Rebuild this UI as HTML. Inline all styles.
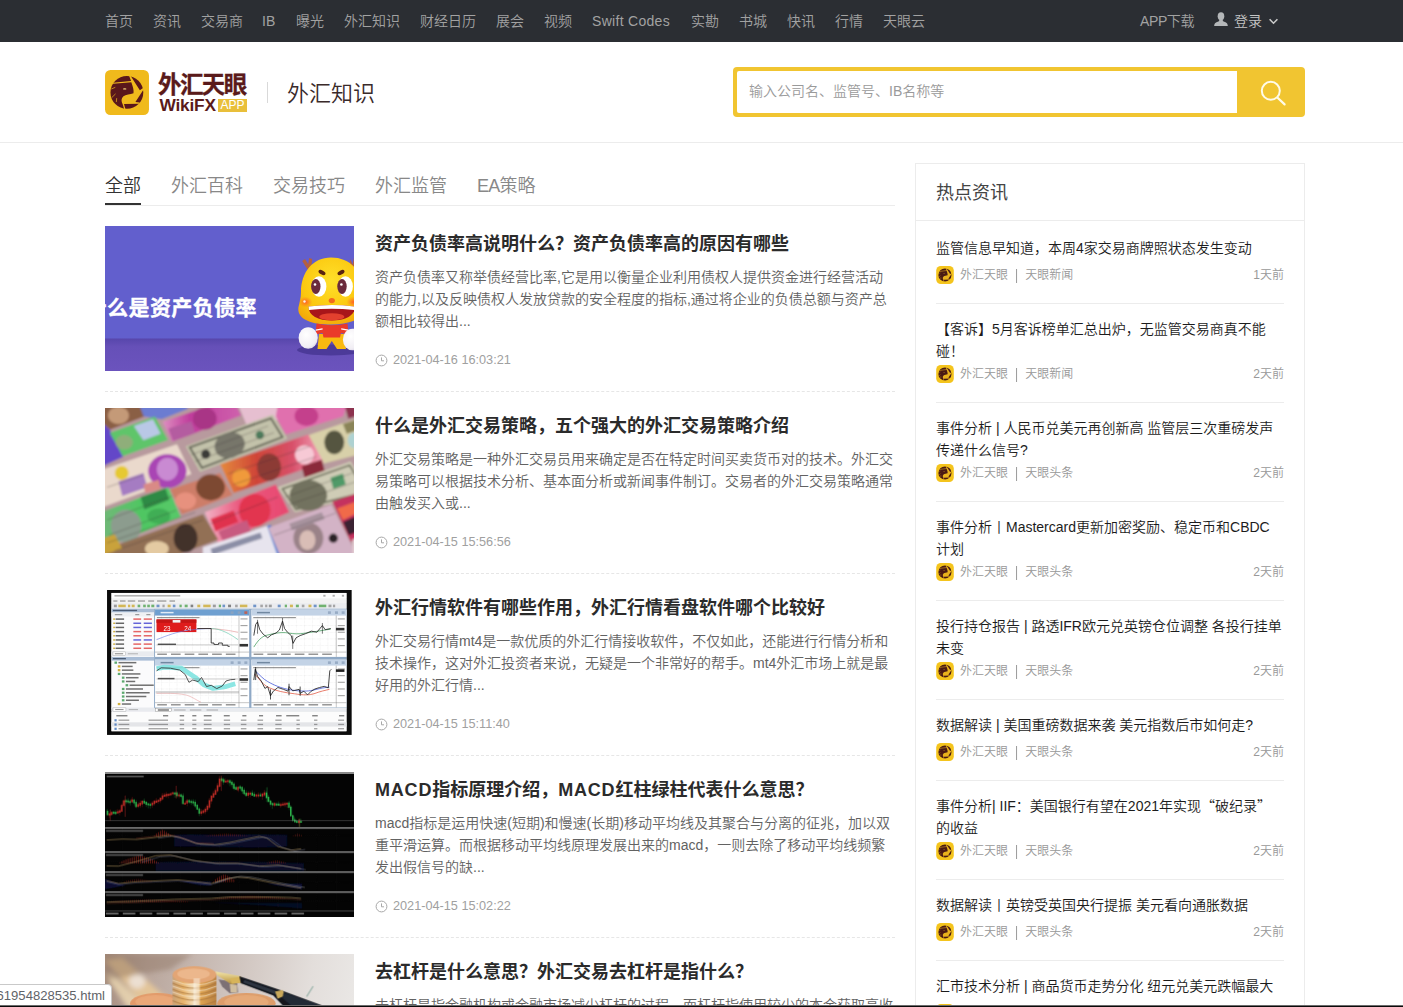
<!DOCTYPE html>
<html lang="zh-CN">
<head>
<meta charset="utf-8">
<title>外汇知识 - 外汇天眼</title>
<style>
*{box-sizing:border-box;margin:0;padding:0}
html,body{width:1403px;height:1007px;overflow:hidden;background:#fff}
body{font-family:"Liberation Sans","Noto Sans CJK SC",sans-serif;font-weight:350;color:#333;position:relative;-webkit-font-smoothing:antialiased}
a{color:inherit;text-decoration:none}
/* top nav */
.topnav{position:absolute;left:0;top:0;width:1403px;height:42px;background:#2b2e33}
.topnav a{position:absolute;top:0;height:42px;line-height:42px;font-size:14px;color:#a2a2a2;white-space:nowrap}
.topnav a.login{color:#c6c6c6}
/* header */
.header{position:absolute;left:0;top:42px;width:1403px;height:101px;background:#fff;border-bottom:1px solid #ececec}
.logo-icon{position:absolute;left:105px;top:28px}
.logo-cn{position:absolute;left:158px;top:27px;font-size:23.5px;line-height:32px;font-weight:700;color:#5a1a1a;letter-spacing:-1.6px;white-space:nowrap;-webkit-text-stroke:0.3px #5a1a1a}
.logo-en{position:absolute;left:159.5px;top:53.5px;font-size:17.3px;line-height:18px;font-weight:bold;color:#5a1a1a;white-space:nowrap;letter-spacing:-0.2px}
.logo-app{position:absolute;left:218px;top:57px;width:29px;height:13px;background:#e9bf3a;color:#fff;font-size:12px;line-height:13px;text-align:center;letter-spacing:0}
.logo-sep{position:absolute;left:267px;top:40px;width:1px;height:21px;background:#d9d9d9}
.logo-title{position:absolute;left:287px;top:35.5px;font-size:22px;line-height:32px;color:#3a2a2a;white-space:nowrap}
.search{position:absolute;left:733px;top:25px;width:572px;height:50px;background:#f1c531;border-radius:4px}
.search .inp{position:absolute;left:4px;top:4px;width:500px;height:42px;background:#fff;border-radius:2px 0 0 2px;font-size:14px;line-height:41px;color:#9a9a9a;padding-left:12px;white-space:nowrap}
.search svg{position:absolute;left:524px;top:10px}
/* tabs */
.tabs{position:absolute;left:105px;top:163px;width:790px;height:43px;border-bottom:1px solid #ececec}
.tabs span{position:absolute;top:8.5px;font-size:18px;line-height:28px;color:#888;white-space:nowrap}
.tabs span.on{color:#333}
.tabs span em{font-style:normal;letter-spacing:-0.8px}
.tabs i{position:absolute;left:0;top:40px;width:36px;height:2px;background:#333}
/* articles */
.art{position:absolute;left:105px;width:790px;height:182px}
.art .pic{position:absolute;left:0;top:0;width:249px;height:145px;overflow:hidden}
.art h3{position:absolute;left:270px;top:4px;font-size:18px;line-height:28px;font-weight:bold;color:#2b2b2b;white-space:nowrap}
.art h3 em{font-style:normal;letter-spacing:0.8px}
.art p{position:absolute;left:270px;top:40px;width:522px;font-size:14px;line-height:22px;color:#626262;font-weight:350}
.art p span{display:block;white-space:nowrap}
.art .tm{position:absolute;left:270px;top:124.5px;font-size:12.7px;line-height:18px;color:#a0a0a0;white-space:nowrap}
.art .tm svg{position:absolute;left:0;top:3px}
.art .tm b{font-weight:normal;margin-left:18px}
.art .dash{position:absolute;left:0;top:165px;width:790px;height:0;border-top:1px dashed #e6e6e6}
/* sidebar */
.side{position:absolute;left:915px;top:163px;width:390px;height:900px;border:1px solid #ececec;background:#fff}
.side h2{position:absolute;left:20px;top:14px;font-size:18px;line-height:30px;font-weight:normal;color:#444}
.side .hl{position:absolute;left:0;top:56px;width:388px;height:1px;background:#ececec}
.hot{position:absolute;left:936px;width:348px}
.hot .t{font-size:14px;line-height:22px;color:#1c1c1c}
.hot .t span{display:block;white-space:nowrap;height:22px}
.hot .t q{quotes:none;font-family:"Noto Sans CJK SC",sans-serif;line-height:0}
.hot .t q:before,.hot .t q:after{content:none}
.hot .m{position:relative;height:22px;font-size:12px;line-height:22px;color:#999;white-space:nowrap}
.hot .m svg{position:absolute;left:0;top:3px}
.hot .m .src{position:absolute;left:24px;top:1px}
.hot .m i{font-style:normal;margin:0 7px;display:inline-block;transform:scaleY(1.25)}
.hot .m .ago{position:absolute;right:0;top:1px}
.hot .ln{position:absolute;left:0;width:348px;height:1px;background:#ececec}
/* status tip */
.tip{position:absolute;left:-1px;top:984px;width:113px;height:23px;background:#fff;border:1px solid #c9c9c9;border-top-right-radius:4px;font-size:13.1px;line-height:21px;color:#5f6368;white-space:nowrap;overflow:hidden}
.tip span{position:absolute;left:-3.5px;top:0}
.botline{position:absolute;left:0;top:1005px;width:1403px;height:2px;background:linear-gradient(#6b6b6b 0,#6b6b6b 50%,#0a0a0a 50%,#0a0a0a 100%)}
</style>
</head>
<body>

<!-- TOP NAV -->
<div class="topnav">
  <a style="left:105px">首页</a>
  <a style="left:153px">资讯</a>
  <a style="left:201px">交易商</a>
  <a style="left:262px">IB</a>
  <a style="left:296px">曝光</a>
  <a style="left:344px">外汇知识</a>
  <a style="left:420px">财经日历</a>
  <a style="left:496px">展会</a>
  <a style="left:544px">视频</a>
  <a style="left:592px;letter-spacing:0.3px">Swift Codes</a>
  <a style="left:691px">实勘</a>
  <a style="left:739px">书城</a>
  <a style="left:787px">快讯</a>
  <a style="left:835px">行情</a>
  <a style="left:883px">天眼云</a>
  <a style="left:1140px;letter-spacing:-0.4px">APP下载</a>
  <a class="login" style="left:1234px">登录</a>
  <svg style="position:absolute;left:1214px;top:12px" width="14" height="14" viewBox="0 0 14 14"><ellipse cx="7" cy="4.3" rx="3.3" ry="4" fill="#b4b7b9"/><path d="M0.2 14 C0.2 10.8 2.6 10 5 9.2 L5.4 7.5 H8.6 L9 9.2 C11.4 10 13.8 10.8 13.8 14 Z" fill="#b4b7b9"/></svg>
  <svg style="position:absolute;left:1268px;top:17px" width="11" height="8" viewBox="0 0 11 8"><path d="M1.6 2.2 L5.5 6.2 L9.4 2.2" fill="none" stroke="#c9c9c9" stroke-width="1.6"/></svg>
</div>

<!-- HEADER -->
<div class="header">
  <svg class="logo-icon" width="44" height="45" viewBox="90 100 764 782"><rect x="90" y="100" width="764" height="782" rx="95" fill="#f0ba1c"/><circle cx="470" cy="490" r="285" fill="#5a171b"/><path d="M508 200 L534 200 L695 452 L752 414 L760 440 L618 655 L692 666 L684 688 L420 693 L445 780 L424 784 L398 700 C368 640 368 590 410 555 C450 525 530 522 585 502 C594 450 572 380 547 312 L228 338 L230 320 L543 293 Z" fill="#f0ba1c"/><ellipse cx="432" cy="430" rx="30" ry="11" fill="#f6d87f"/><path d="M205 428 L262 404 M212 575 L268 520 M287 650 L292 596" stroke="#f0ba1c" stroke-width="12" fill="none" stroke-linecap="round"/></svg>
  <div class="logo-cn">外汇天眼</div>
  <div class="logo-en">WikiFX</div>
  <div class="logo-app">APP</div>
  <div class="logo-sep"></div>
  <div class="logo-title">外汇知识</div>
  <div class="search">
    <div class="inp">输入公司名、监管号、IB名称等</div>
    <svg width="32" height="32" viewBox="0 0 32 32"><circle cx="13.8" cy="13.8" r="9" fill="none" stroke="#fffbe8" stroke-width="2"/><path d="M20.6 20.8 L27.6 27.4" stroke="#fffbe8" stroke-width="2.2" stroke-linecap="round"/></svg>
  </div>
</div>

<!-- TABS -->
<div class="tabs">
  <span class="on" style="left:0">全部</span>
  <span style="left:66px">外汇百科</span>
  <span style="left:168px">交易技巧</span>
  <span style="left:270px">外汇监管</span>
  <span style="left:372px"><em>EA</em>策略</span>
  <i></i>
</div>

<!-- ARTICLES -->
<div class="art" style="top:226px">
  <div class="pic"><!--P1S--><svg width="249" height="145" viewBox="0 0 249 145">
<defs>
<linearGradient id="p1f" x1="0" y1="0" x2="0" y2="1"><stop offset="0" stop-color="#5746ab"/><stop offset="0.25" stop-color="#6650b8"/><stop offset="1" stop-color="#6b53bd"/></linearGradient>
<radialGradient id="p1h" cx="0.5" cy="0.35" r="0.75"><stop offset="0" stop-color="#ffe02a"/><stop offset="0.6" stop-color="#fbc70f"/><stop offset="1" stop-color="#f0a008"/></radialGradient>
<radialGradient id="p1w" cx="0.4" cy="0.35" r="0.8"><stop offset="0" stop-color="#ffffff"/><stop offset="0.7" stop-color="#f1eef4"/><stop offset="1" stop-color="#c9c2dc"/></radialGradient>
<radialGradient id="p1c" cx="0.5" cy="0.5" r="0.5"><stop offset="0" stop-color="#ff5a28" stop-opacity="0.95"/><stop offset="1" stop-color="#ff7a20" stop-opacity="0"/></radialGradient>
</defs>
<rect width="249" height="145" fill="#625fcd"/>
<rect y="112.5" width="249" height="32.5" fill="url(#p1f)"/>
<ellipse cx="226" cy="124" rx="34" ry="5.5" fill="#43338f" opacity="0.75"/>
<text x="-19.4" y="88.7" font-family="'Liberation Sans','Noto Sans CJK SC',sans-serif" font-weight="700" font-size="21" fill="#fff" stroke="#fff" stroke-width="0.35" textLength="171" lengthAdjust="spacing">什么是资产负债率</text>
<path d="M200 33 l3.2 5 l1-6 l3 1 l-1 9 l-4 1 l-5-8z" fill="#b3603f"/>
<path d="M245 33 l2.6 5 l1.4-6 h1 v14 l-5 -3z" fill="#b3603f"/>
<path d="M226 31.5 C246 31.5 258 46 258 66 C258 72 259 76 260 80 C262 92 246 98.5 226 98.5 C206 98.5 191.5 93 193.5 81 C194.5 77 196 72 196 66 C196 46 208 31.5 226 31.5Z" fill="url(#p1h)"/>
<ellipse cx="200.5" cy="76" rx="7" ry="5.5" fill="url(#p1c)"/>
<ellipse cx="248.5" cy="76" rx="7" ry="5.5" fill="url(#p1c)"/>
<circle cx="199.5" cy="75.5" r="1.2" fill="#fff" opacity="0.9"/>
<ellipse cx="217" cy="46.5" rx="3.8" ry="2" transform="rotate(28 217 46.5)" fill="#5a2410"/>
<ellipse cx="236" cy="46.5" rx="3.8" ry="2" transform="rotate(-28 236 46.5)" fill="#5a2410"/>
<ellipse cx="214" cy="60.5" rx="7.4" ry="10.3" fill="#fff"/>
<ellipse cx="240.5" cy="60.5" rx="7.4" ry="10.3" fill="#fff"/>
<ellipse cx="210.8" cy="60.5" rx="4.7" ry="7.4" fill="#6a2a3c"/>
<ellipse cx="237" cy="60.5" rx="4.7" ry="7.4" fill="#6a2a3c"/>
<circle cx="210" cy="58.5" r="1.3" fill="#fff"/><circle cx="236.4" cy="58.5" r="1.3" fill="#fff"/>
<ellipse cx="226.8" cy="74.6" rx="3.1" ry="2.6" fill="#f26a1c"/>
<path d="M203.5 80.5 Q226.5 77.5 250 80.5 C250 90 240 94.5 226.8 94.5 C213 94.5 203.5 90 203.5 80.5Z" fill="#a8161a"/>
<path d="M203.5 80.5 Q226.5 77.5 250 80.5 L249.6 84 Q226.5 81.5 204 84Z" fill="#fff"/>
<ellipse cx="226.8" cy="90.8" rx="12.5" ry="3.6" fill="#e3402e"/>
<path d="M214 108 H239.5 L241 123 H232 L226.8 115 L221.5 123 H212.5Z" fill="#f9b90f"/>
<path d="M211.5 97.5 Q226.8 101 242.5 97.5 L243.5 108.5 L236 107 L235 111.5 H218.5 L217.5 107 L210.5 108.5Z" fill="#ea3a2a"/>
<path d="M210.8 104.2 L217.6 102.8 M243.2 104.2 L236.2 102.8" stroke="#fff" stroke-width="1.3"/>
<ellipse cx="203.2" cy="112" rx="9.6" ry="10.8" fill="url(#p1w)"/>
<ellipse cx="247.5" cy="113.5" rx="9.6" ry="10.8" fill="url(#p1w)"/>
</svg><!--P1E--></div>
  <h3>资产负债率高说明什么？资产负债率高的原因有哪些</h3>
  <p><span>资产负债率又称举债经营比率,它是用以衡量企业利用债权人提供资金进行经营活动</span><span>的能力,以及反映债权人发放贷款的安全程度的指标,通过将企业的负债总额与资产总</span><span>额相比较得出...</span></p>
  <div class="tm"><svg width="13" height="13" viewBox="0 0 13 13"><circle cx="6.5" cy="6.5" r="5.4" fill="none" stroke="#a8a8a8" stroke-width="1"/><path d="M6.5 3.4V6.8H9" fill="none" stroke="#a8a8a8" stroke-width="1"/></svg><b>2021-04-16 16:03:21</b></div>
  <div class="dash"></div>
</div>
<div class="art" style="top:408px">
  <div class="pic"><!--P2S--><svg width="249" height="145" viewBox="27 43 1343.6 782.4" preserveAspectRatio="none">
<defs>
<linearGradient id="p2nz" x1="0" y1="0" x2="1" y2="0"><stop offset="0" stop-color="#e58a3c"/><stop offset="0.35" stop-color="#cf4538"/><stop offset="0.7" stop-color="#d8506a"/><stop offset="1" stop-color="#f3a6bd"/></linearGradient>
<linearGradient id="p2rm" x1="0" y1="0" x2="1" y2="0"><stop offset="0" stop-color="#f2b3c6"/><stop offset="0.4" stop-color="#ea5b80"/><stop offset="1" stop-color="#e8476f"/></linearGradient>
<linearGradient id="p2mg" x1="0" y1="0" x2="1" y2="0"><stop offset="0" stop-color="#dd8fc0"/><stop offset="0.35" stop-color="#c03c9c"/><stop offset="1" stop-color="#cf62ad"/></linearGradient>
<linearGradient id="p2au" x1="0" y1="0" x2="1" y2="0"><stop offset="0" stop-color="#74b77a"/><stop offset="0.5" stop-color="#4fc662"/><stop offset="1" stop-color="#57c968"/></linearGradient>
<filter id="p2b" filterUnits="userSpaceOnUse" x="-60" y="-40" width="1520" height="960"><feGaussianBlur stdDeviation="5"/></filter>
</defs>
<g filter="url(#p2b)" transform="translate(698.8 434.2) scale(1.035) translate(-698.8 -434.2)">
<rect x="-60" y="-40" width="1520" height="960" fill="#b89a9e"/>
<polygon points="27,43 235,43 255,100 75,170 27,125" fill="#8a5e44"/>
<ellipse cx="120" cy="95" rx="55" ry="45" fill="#c49a78"/>
<polygon points="230,43 480,43 480,62 345,115 252,100" fill="#6c7bd1"/>
<polygon points="27,125 75,170 145,310 27,365" fill="#6446c8"/>
<polygon points="75,185 310,100 378,223 143,308" fill="#5fc56a"/>
<polygon points="200,150 300,115 340,190 250,225" fill="#b9c8e6"/>
<ellipse cx="150" cy="235" rx="45" ry="38" fill="#8fae7a"/>
<polygon points="350,128 600,43 735,43 760,95 400,232" fill="url(#p2mg)"/>
<ellipse cx="570" cy="112" rx="62" ry="58" fill="#a93486"/>
<polygon points="380,165 500,125 520,185 405,228" fill="#b45ca0"/>
<polygon points="745,43 950,43 1000,110 790,150" fill="#e6bfd0"/>
<polygon points="950,43 1310,43 1292,100 992,195 940,100" fill="#e070ae"/>
<ellipse cx="1100" cy="98" rx="62" ry="52" fill="#c4408c"/>
<polygon points="1300,43 1371,43 1371,95 1318,112" fill="#8d3350"/>
<polygon points="470,255 925,90 1000,215 545,390" fill="#c3c2aa"/>
<polygon points="492,262 915,110 975,208 555,368" fill="none" stroke="#5f5f52" stroke-width="10"/>
<ellipse cx="700" cy="250" rx="80" ry="66" transform="rotate(-19 700 250)" fill="#77766a"/>
<circle cx="575" cy="297" r="24" fill="#3a3a38"/><circle cx="857" cy="197" r="22" fill="#4d7b5c"/>
<polygon points="1105,200 1371,108 1371,300 1190,345" fill="#d8d0a9"/>
<ellipse cx="1245" cy="235" rx="52" ry="62" fill="#55553f"/>
<polygon points="1290,140 1371,112 1371,170 1310,190" fill="#8a8458"/>
<ellipse cx="1345" cy="225" rx="30" ry="40" fill="#aed2d2"/>
<polygon points="27,380 425,245 500,400 27,578" fill="#ead9cc"/>
<ellipse cx="375" cy="385" rx="100" ry="88" fill="#a945b4"/>
<ellipse cx="375" cy="375" rx="55" ry="60" fill="#c98ad2"/>
<circle cx="137" cy="395" r="36" fill="#e6c931"/>
<polygon points="120,440 250,395 270,470 140,515" fill="#a57cc2"/>
<polygon points="250,455 330,430 340,480 260,500" fill="#d98a86"/>
<polygon points="650,350 1110,195 1190,340 720,500" fill="url(#p2nz)"/>
<ellipse cx="905" cy="365" rx="62" ry="72" fill="#8c3a35"/>
<circle cx="760" cy="420" r="48" fill="#f09a3a"/>
<circle cx="1090" cy="300" r="50" fill="#f7c9d5"/>
<polygon points="1075,360 1180,325 1195,385 1090,420" fill="#8a2a3a"/>
<polygon points="950,470 1330,335 1371,400 1371,520 1040,600" fill="#cfccb6"/>
<polygon points="975,478 1325,355 1371,430 1371,505 1045,585" fill="none" stroke="#6a6a58" stroke-width="9"/>
<ellipse cx="1110" cy="512" rx="98" ry="80" fill="#72725e"/>
<polygon points="1225,420 1290,398 1305,455 1240,478" fill="#4f9a68"/>
<polygon points="390,480 650,395 715,510 450,612" fill="#cd7d68"/>
<ellipse cx="600" cy="470" rx="75" ry="68" fill="#7d4a32"/>
<ellipse cx="470" cy="540" rx="55" ry="45" fill="#e7917e"/>
<polygon points="570,600 940,455 1010,600 640,762" fill="url(#p2rm)"/>
<ellipse cx="830" cy="590" rx="82" ry="85" fill="#e2344f"/>
<polygon points="600,635 720,590 745,650 625,700" fill="#e0304e"/>
<polygon points="640,700 790,640 810,700 670,760" fill="#c85a80"/>
<polygon points="27,600 380,470 445,625 27,792" fill="url(#p2au)"/>
<ellipse cx="160" cy="672" rx="80" ry="85" fill="#8c9c8e"/>
<polygon points="235,520 365,475 385,535 255,585" fill="#2f8a45"/>
<ellipse cx="330" cy="620" rx="60" ry="40" fill="#3fae55"/>
<polygon points="1235,545 1371,498 1371,742 1330,752" fill="#c4335e"/>
<polygon points="1260,580 1371,540 1371,600 1290,640" fill="#f06a4a"/>
<polygon points="1290,650 1371,615 1371,700 1320,720" fill="#3a2030"/>
<polygon points="27,800 560,610 640,742 420,826 27,826" fill="#927055"/>
<ellipse cx="470" cy="735" rx="62" ry="75" fill="#43302a"/>
<ellipse cx="320" cy="790" rx="62" ry="40" fill="#e4caa2"/>
<polygon points="27,740 100,715 140,790 27,826" fill="#c9a23a"/>
<polygon points="560,782 905,668 965,826 560,826" fill="#e7e4ee"/>
<polygon points="895,672 915,666 975,826 950,826" fill="#2f6fd1"/>
<polygon points="600,790 860,705 870,735 610,822" fill="#8b8ea6"/>
<polygon points="900,680 1230,560 1340,780 1340,826 962,826" fill="#d3b3c6"/>
<ellipse cx="1110" cy="735" rx="78" ry="82" fill="#9a8288"/>
<ellipse cx="1105" cy="745" rx="42" ry="52" fill="#d9bdb6"/>
<circle cx="1240" cy="735" r="24" fill="#2b2326"/>
<polygon points="1010,660 1180,600 1195,635 1025,695" fill="#a7939e"/>
<polygon points="1340,742 1371,732 1371,826 1340,826" fill="#e6d0d6"/>
<g stroke="#3a3030" stroke-width="5" opacity="0.35" fill="none">
<path d="M500 300 L900 150 M520 335 L930 185"/>
<path d="M990 520 L1340 395 M1010 560 L1360 440"/>
<path d="M60 760 L520 600 M100 800 L560 640"/>
<path d="M930 720 L1250 605"/>
<path d="M60 470 L250 405"/>
<path d="M690 400 L1120 255 M720 455 L1150 310"/>
<path d="M600 660 L950 520"/>
<path d="M60 640 L400 515 M70 720 L420 590"/>
</g>
</g>
</svg><!--P2E--></div>
  <h3>什么是外汇交易策略，五个强大的外汇交易策略介绍</h3>
  <p><span>外汇交易策略是一种外汇交易员用来确定是否在特定时间买卖货币对的技术。外汇交</span><span>易策略可以根据技术分析、基本面分析或新闻事件制订。交易者的外汇交易策略通常</span><span>由触发买入或...</span></p>
  <div class="tm"><svg width="13" height="13" viewBox="0 0 13 13"><circle cx="6.5" cy="6.5" r="5.4" fill="none" stroke="#a8a8a8" stroke-width="1"/><path d="M6.5 3.4V6.8H9" fill="none" stroke="#a8a8a8" stroke-width="1"/></svg><b>2021-04-15 15:56:56</b></div>
  <div class="dash"></div>
</div>
<div class="art" style="top:590px">
  <div class="pic"><!--P3S--><svg width="249" height="145" viewBox="27 54 1343.6 782.4" preserveAspectRatio="none">
<defs><filter id="p3b" filterUnits="userSpaceOnUse" x="0" y="0" width="1400" height="900"><feGaussianBlur stdDeviation="2.2"/></filter></defs>
<rect x="0" y="0" width="1400" height="900" fill="#fff"/>
<rect x="38" y="54" width="1320" height="782" fill="#0b0b0b"/>
<g filter="url(#p3b)">
<rect x="62" y="70" width="1268" height="746" fill="#f3f4f6"/>
<rect x="62" y="70" width="1268" height="30" fill="#fdfdfd"/>
<rect x="78" y="82" width="355" height="7" fill="#555" opacity="0.55"/>
<rect x="1205" y="80" width="12" height="10" fill="#777" opacity="0.6"/>
<rect x="1255" y="80" width="12" height="10" fill="#777" opacity="0.6"/>
<rect x="1305" y="80" width="12" height="10" fill="#777" opacity="0.6"/>
<rect x="62" y="100" width="1268" height="25" fill="#f2f2f2"/>
<rect x="72" y="110" width="22" height="7" fill="#444" opacity="0.5"/>
<rect x="108" y="110" width="30" height="7" fill="#444" opacity="0.5"/>
<rect x="150" y="110" width="40" height="7" fill="#444" opacity="0.5"/>
<rect x="205" y="110" width="38" height="7" fill="#444" opacity="0.5"/>
<rect x="260" y="110" width="32" height="7" fill="#444" opacity="0.5"/>
<rect x="308" y="110" width="50" height="7" fill="#444" opacity="0.5"/>
<rect x="375" y="110" width="30" height="7" fill="#444" opacity="0.5"/>
<rect x="62" y="125" width="1268" height="30" fill="#ebecef"/>
<rect x="75" y="133" width="16" height="14" fill="#7a7a7a" opacity="0.7"/>
<rect x="99" y="133" width="40" height="14" fill="#c9a21a" opacity="0.7"/>
<rect x="151" y="133" width="12" height="14" fill="#c9a21a" opacity="0.7"/>
<rect x="171" y="133" width="16" height="14" fill="#c9a21a" opacity="0.7"/>
<rect x="203" y="133" width="14" height="14" fill="#3a9a3a" opacity="0.7"/>
<rect x="233" y="133" width="14" height="14" fill="#3a9a3a" opacity="0.7"/>
<rect x="255" y="133" width="14" height="14" fill="#3a9a3a" opacity="0.7"/>
<rect x="277" y="133" width="16" height="14" fill="#3a9a3a" opacity="0.7"/>
<rect x="305" y="133" width="16" height="14" fill="#3b6fb8" opacity="0.7"/>
<rect x="337" y="133" width="12" height="14" fill="#888" opacity="0.7"/>
<rect x="365" y="133" width="16" height="14" fill="#c9a21a" opacity="0.7"/>
<rect x="393" y="133" width="14" height="14" fill="#3b6fb8" opacity="0.7"/>
<rect x="429" y="133" width="12" height="14" fill="#3a9a3a" opacity="0.7"/>
<rect x="457" y="133" width="16" height="14" fill="#3a9a3a" opacity="0.7"/>
<rect x="489" y="133" width="14" height="14" fill="#555" opacity="0.7"/>
<rect x="525" y="133" width="16" height="14" fill="#c9a21a" opacity="0.7"/>
<rect x="557" y="133" width="40" height="14" fill="#c9a21a" opacity="0.7"/>
<rect x="609" y="133" width="16" height="14" fill="#7a7a7a" opacity="0.7"/>
<rect x="641" y="133" width="12" height="14" fill="#3a9a3a" opacity="0.7"/>
<rect x="661" y="133" width="14" height="14" fill="#3b6fb8" opacity="0.7"/>
<rect x="691" y="133" width="16" height="14" fill="#555" opacity="0.7"/>
<rect x="729" y="133" width="14" height="14" fill="#888" opacity="0.7"/>
<rect x="755" y="133" width="40" height="14" fill="#c9a21a" opacity="0.7"/>
<rect x="827" y="133" width="16" height="14" fill="#3b6fb8" opacity="0.7"/>
<rect x="865" y="133" width="14" height="14" fill="#888" opacity="0.7"/>
<rect x="891" y="133" width="12" height="14" fill="#888" opacity="0.7"/>
<rect x="911" y="133" width="16" height="14" fill="#7a7a7a" opacity="0.7"/>
<rect x="959" y="133" width="16" height="14" fill="#3b6fb8" opacity="0.7"/>
<rect x="997" y="133" width="12" height="14" fill="#3a9a3a" opacity="0.7"/>
<rect x="1025" y="133" width="16" height="14" fill="#c9a21a" opacity="0.7"/>
<rect x="1057" y="133" width="16" height="14" fill="#3a9a3a" opacity="0.7"/>
<rect x="1089" y="133" width="14" height="14" fill="#888" opacity="0.7"/>
<rect x="1125" y="133" width="16" height="14" fill="#c9a21a" opacity="0.7"/>
<rect x="1153" y="133" width="16" height="14" fill="#3b6fb8" opacity="0.7"/>
<rect x="1181" y="133" width="40" height="14" fill="#3a9a3a" opacity="0.7"/>
<rect x="1233" y="133" width="16" height="14" fill="#888" opacity="0.7"/>
<rect x="1257" y="133" width="12" height="14" fill="#888" opacity="0.7"/>
<rect x="62" y="155" width="230" height="540" fill="#fbfbfc"/>
<rect x="62" y="155" width="230" height="20" fill="#a9bdd6"/>
<rect x="70" y="161" width="130" height="7" fill="#23324a" opacity="0.7"/>
<rect x="62" y="177" width="230" height="20" fill="#eef0f3"/>
<rect x="80" y="184" width="40" height="6" fill="#555" opacity="0.6"/>
<rect x="190" y="184" width="22" height="6" fill="#555" opacity="0.6"/>
<rect x="250" y="184" width="22" height="6" fill="#555" opacity="0.6"/>
<rect x="72" y="207.0" width="8" height="8" fill="#c9a21a"/>
<rect x="84" y="207.0" width="46" height="8" fill="#333" opacity="0.75"/>
<rect x="180" y="207.0" width="42" height="8" fill="#d33" opacity="0.75"/>
<rect x="236" y="207.0" width="44" height="8" fill="#d33" opacity="0.75"/>
<rect x="72" y="229.5" width="8" height="8" fill="#c9a21a"/>
<rect x="84" y="229.5" width="46" height="8" fill="#333" opacity="0.75"/>
<rect x="180" y="229.5" width="42" height="8" fill="#33c" opacity="0.75"/>
<rect x="236" y="229.5" width="44" height="8" fill="#33c" opacity="0.75"/>
<rect x="72" y="252.0" width="8" height="8" fill="#c9a21a"/>
<rect x="84" y="252.0" width="46" height="8" fill="#333" opacity="0.75"/>
<rect x="180" y="252.0" width="42" height="8" fill="#33c" opacity="0.75"/>
<rect x="236" y="252.0" width="44" height="8" fill="#33c" opacity="0.75"/>
<rect x="72" y="274.5" width="8" height="8" fill="#c9a21a"/>
<rect x="84" y="274.5" width="46" height="8" fill="#333" opacity="0.75"/>
<rect x="180" y="274.5" width="42" height="8" fill="#d33" opacity="0.75"/>
<rect x="236" y="274.5" width="44" height="8" fill="#d33" opacity="0.75"/>
<rect x="72" y="297.0" width="8" height="8" fill="#c9a21a"/>
<rect x="84" y="297.0" width="46" height="8" fill="#333" opacity="0.75"/>
<rect x="180" y="297.0" width="42" height="8" fill="#d33" opacity="0.75"/>
<rect x="236" y="297.0" width="44" height="8" fill="#d33" opacity="0.75"/>
<rect x="72" y="319.5" width="8" height="8" fill="#c9a21a"/>
<rect x="84" y="319.5" width="46" height="8" fill="#333" opacity="0.75"/>
<rect x="180" y="319.5" width="42" height="8" fill="#33c" opacity="0.75"/>
<rect x="236" y="319.5" width="44" height="8" fill="#33c" opacity="0.75"/>
<rect x="72" y="342.0" width="8" height="8" fill="#c9a21a"/>
<rect x="84" y="342.0" width="46" height="8" fill="#333" opacity="0.75"/>
<rect x="180" y="342.0" width="42" height="8" fill="#d33" opacity="0.75"/>
<rect x="236" y="342.0" width="44" height="8" fill="#d33" opacity="0.75"/>
<rect x="72" y="364.5" width="8" height="8" fill="#c9a21a"/>
<rect x="84" y="364.5" width="46" height="8" fill="#333" opacity="0.75"/>
<rect x="180" y="364.5" width="42" height="8" fill="#d33" opacity="0.75"/>
<rect x="236" y="364.5" width="44" height="8" fill="#d33" opacity="0.75"/>
<rect x="62" y="385" width="230" height="25" fill="#e9ebef"/>
<rect x="70" y="388" width="68" height="20" fill="#fff" stroke="#999" stroke-width="2"/>
<rect x="80" y="395" width="45" height="6" fill="#444" opacity="0.6"/>
<rect x="150" y="395" width="55" height="6" fill="#888" opacity="0.5"/>
<rect x="62" y="415" width="230" height="20" fill="#a9bdd6"/>
<rect x="70" y="421" width="70" height="7" fill="#23324a" opacity="0.7"/>
<rect x="78" y="440.0" width="14" height="12" fill="#3e9a55" opacity="0.85"/>
<rect x="100" y="442.0" width="96" height="8" fill="#333" opacity="0.7"/>
<rect x="96" y="460.3" width="14" height="12" fill="#c9a21a" opacity="0.85"/>
<rect x="118" y="462.3" width="58" height="8" fill="#333" opacity="0.7"/>
<rect x="96" y="480.6" width="14" height="12" fill="#c9a21a" opacity="0.85"/>
<rect x="118" y="482.6" width="62" height="8" fill="#333" opacity="0.7"/>
<rect x="96" y="500.9" width="14" height="12" fill="#3e9a55" opacity="0.85"/>
<rect x="118" y="502.9" width="100" height="8" fill="#333" opacity="0.7"/>
<rect x="118" y="521.2" width="14" height="12" fill="#3e9a55" opacity="0.85"/>
<rect x="140" y="523.2" width="68" height="8" fill="#333" opacity="0.7"/>
<rect x="118" y="541.5" width="14" height="12" fill="#3e9a55" opacity="0.85"/>
<rect x="140" y="543.5" width="50" height="8" fill="#333" opacity="0.7"/>
<rect x="138" y="561.8" width="14" height="12" fill="#3e9a55" opacity="0.85"/>
<rect x="160" y="563.8" width="130" height="8" fill="#333" opacity="0.7"/>
<rect x="118" y="582.1" width="14" height="12" fill="#3e9a55" opacity="0.85"/>
<rect x="140" y="584.1" width="92" height="8" fill="#333" opacity="0.7"/>
<rect x="118" y="602.4" width="14" height="12" fill="#3e9a55" opacity="0.85"/>
<rect x="140" y="604.4" width="128" height="8" fill="#333" opacity="0.7"/>
<rect x="118" y="622.7" width="14" height="12" fill="#3e9a55" opacity="0.85"/>
<rect x="140" y="624.7" width="110" height="8" fill="#333" opacity="0.7"/>
<rect x="118" y="643.0" width="14" height="12" fill="#3e9a55" opacity="0.85"/>
<rect x="140" y="645.0" width="70" height="8" fill="#333" opacity="0.7"/>
<rect x="96" y="663.3" width="14" height="12" fill="#c9a21a" opacity="0.85"/>
<rect x="118" y="665.3" width="50" height="8" fill="#333" opacity="0.7"/>
<rect x="62" y="688" width="230" height="22" fill="#e9ebef"/>
<rect x="70" y="690" width="70" height="18" fill="#fff" stroke="#999" stroke-width="2"/>
<rect x="82" y="696" width="45" height="6" fill="#444" opacity="0.55"/>
<rect x="155" y="696" width="50" height="6" fill="#888" opacity="0.5"/>
<rect x="292" y="155" width="1038" height="540" fill="#8fa9c6"/>
<rect x="297" y="160" width="508" height="255" fill="#fff"/>
<rect x="297" y="160" width="508" height="32" fill="#6e9fd0"/>
<rect x="327" y="172" width="70" height="8" fill="#fff" opacity="0.8"/>
<rect x="705" y="169" width="16" height="14" fill="#8da3bd" opacity="0.8"/>
<rect x="743" y="169" width="16" height="14" fill="#8da3bd" opacity="0.8"/>
<rect x="779" y="169" width="16" height="14" fill="#d0523a" opacity="0.8"/>
<path d="M332 194V387" stroke="#b9b9b9" stroke-width="1.6" stroke-dasharray="3 4" opacity="0.8"/>
<path d="M374 194V387" stroke="#b9b9b9" stroke-width="1.6" stroke-dasharray="3 4" opacity="0.8"/>
<path d="M416 194V387" stroke="#b9b9b9" stroke-width="1.6" stroke-dasharray="3 4" opacity="0.8"/>
<path d="M458 194V387" stroke="#b9b9b9" stroke-width="1.6" stroke-dasharray="3 4" opacity="0.8"/>
<path d="M500 194V387" stroke="#b9b9b9" stroke-width="1.6" stroke-dasharray="3 4" opacity="0.8"/>
<path d="M542 194V387" stroke="#b9b9b9" stroke-width="1.6" stroke-dasharray="3 4" opacity="0.8"/>
<path d="M584 194V387" stroke="#b9b9b9" stroke-width="1.6" stroke-dasharray="3 4" opacity="0.8"/>
<path d="M626 194V387" stroke="#b9b9b9" stroke-width="1.6" stroke-dasharray="3 4" opacity="0.8"/>
<path d="M668 194V387" stroke="#b9b9b9" stroke-width="1.6" stroke-dasharray="3 4" opacity="0.8"/>
<path d="M710 194V387" stroke="#b9b9b9" stroke-width="1.6" stroke-dasharray="3 4" opacity="0.8"/>
<path d="M301 210H750" stroke="#b9b9b9" stroke-width="1.6" stroke-dasharray="3 4" opacity="0.8"/>
<rect x="758" y="207" width="38" height="6" fill="#555" opacity="0.55"/>
<path d="M301 246H750" stroke="#b9b9b9" stroke-width="1.6" stroke-dasharray="3 4" opacity="0.8"/>
<rect x="758" y="243" width="38" height="6" fill="#555" opacity="0.55"/>
<path d="M301 282H750" stroke="#b9b9b9" stroke-width="1.6" stroke-dasharray="3 4" opacity="0.8"/>
<rect x="758" y="279" width="38" height="6" fill="#555" opacity="0.55"/>
<path d="M301 318H750" stroke="#b9b9b9" stroke-width="1.6" stroke-dasharray="3 4" opacity="0.8"/>
<rect x="758" y="315" width="38" height="6" fill="#555" opacity="0.55"/>
<path d="M301 354H750" stroke="#b9b9b9" stroke-width="1.6" stroke-dasharray="3 4" opacity="0.8"/>
<rect x="758" y="351" width="38" height="6" fill="#555" opacity="0.55"/>
<path d="M750 192V415" stroke="#666" stroke-width="2"/>
<path d="M297 389H805" stroke="#666" stroke-width="2"/>
<rect x="309" y="397" width="52" height="7" fill="#444" opacity="0.65"/>
<rect x="383" y="397" width="52" height="7" fill="#444" opacity="0.65"/>
<rect x="457" y="397" width="52" height="7" fill="#444" opacity="0.65"/>
<rect x="531" y="397" width="52" height="7" fill="#444" opacity="0.65"/>
<rect x="605" y="397" width="52" height="7" fill="#444" opacity="0.65"/>
<rect x="679" y="397" width="52" height="7" fill="#444" opacity="0.65"/>
<rect x="307" y="200" width="230" height="6" fill="#333" opacity="0.55"/>
<rect x="817" y="160" width="513" height="255" fill="#fff"/>
<rect x="817" y="160" width="513" height="32" fill="#c3d3e6"/>
<rect x="847" y="172" width="70" height="8" fill="#5d7690" opacity="0.8"/>
<rect x="1230" y="169" width="16" height="14" fill="#8da3bd" opacity="0.8"/>
<rect x="1268" y="169" width="16" height="14" fill="#8da3bd" opacity="0.8"/>
<rect x="1304" y="169" width="16" height="14" fill="#8da3bd" opacity="0.8"/>
<path d="M852 194V387" stroke="#b9b9b9" stroke-width="1.6" stroke-dasharray="3 4" opacity="0.8"/>
<path d="M894 194V387" stroke="#b9b9b9" stroke-width="1.6" stroke-dasharray="3 4" opacity="0.8"/>
<path d="M936 194V387" stroke="#b9b9b9" stroke-width="1.6" stroke-dasharray="3 4" opacity="0.8"/>
<path d="M978 194V387" stroke="#b9b9b9" stroke-width="1.6" stroke-dasharray="3 4" opacity="0.8"/>
<path d="M1020 194V387" stroke="#b9b9b9" stroke-width="1.6" stroke-dasharray="3 4" opacity="0.8"/>
<path d="M1062 194V387" stroke="#b9b9b9" stroke-width="1.6" stroke-dasharray="3 4" opacity="0.8"/>
<path d="M1104 194V387" stroke="#b9b9b9" stroke-width="1.6" stroke-dasharray="3 4" opacity="0.8"/>
<path d="M1146 194V387" stroke="#b9b9b9" stroke-width="1.6" stroke-dasharray="3 4" opacity="0.8"/>
<path d="M1188 194V387" stroke="#b9b9b9" stroke-width="1.6" stroke-dasharray="3 4" opacity="0.8"/>
<path d="M1230 194V387" stroke="#b9b9b9" stroke-width="1.6" stroke-dasharray="3 4" opacity="0.8"/>
<path d="M1272 194V387" stroke="#b9b9b9" stroke-width="1.6" stroke-dasharray="3 4" opacity="0.8"/>
<path d="M821 210H1275" stroke="#b9b9b9" stroke-width="1.6" stroke-dasharray="3 4" opacity="0.8"/>
<rect x="1283" y="207" width="38" height="6" fill="#555" opacity="0.55"/>
<path d="M821 246H1275" stroke="#b9b9b9" stroke-width="1.6" stroke-dasharray="3 4" opacity="0.8"/>
<rect x="1283" y="243" width="38" height="6" fill="#555" opacity="0.55"/>
<path d="M821 282H1275" stroke="#b9b9b9" stroke-width="1.6" stroke-dasharray="3 4" opacity="0.8"/>
<rect x="1283" y="279" width="38" height="6" fill="#555" opacity="0.55"/>
<path d="M821 318H1275" stroke="#b9b9b9" stroke-width="1.6" stroke-dasharray="3 4" opacity="0.8"/>
<rect x="1283" y="315" width="38" height="6" fill="#555" opacity="0.55"/>
<path d="M821 354H1275" stroke="#b9b9b9" stroke-width="1.6" stroke-dasharray="3 4" opacity="0.8"/>
<rect x="1283" y="351" width="38" height="6" fill="#555" opacity="0.55"/>
<path d="M1275 192V415" stroke="#666" stroke-width="2"/>
<path d="M817 389H1330" stroke="#666" stroke-width="2"/>
<rect x="829" y="397" width="52" height="7" fill="#444" opacity="0.65"/>
<rect x="903" y="397" width="52" height="7" fill="#444" opacity="0.65"/>
<rect x="977" y="397" width="52" height="7" fill="#444" opacity="0.65"/>
<rect x="1051" y="397" width="52" height="7" fill="#444" opacity="0.65"/>
<rect x="1125" y="397" width="52" height="7" fill="#444" opacity="0.65"/>
<rect x="1199" y="397" width="52" height="7" fill="#444" opacity="0.65"/>
<rect x="827" y="200" width="230" height="6" fill="#333" opacity="0.55"/>
<rect x="297" y="430" width="508" height="258" fill="#fff"/>
<rect x="297" y="430" width="508" height="32" fill="#c3d3e6"/>
<rect x="327" y="442" width="70" height="8" fill="#5d7690" opacity="0.8"/>
<rect x="705" y="439" width="16" height="14" fill="#8da3bd" opacity="0.8"/>
<rect x="743" y="439" width="16" height="14" fill="#8da3bd" opacity="0.8"/>
<rect x="779" y="439" width="16" height="14" fill="#8da3bd" opacity="0.8"/>
<path d="M332 464V660" stroke="#b9b9b9" stroke-width="1.6" stroke-dasharray="3 4" opacity="0.8"/>
<path d="M374 464V660" stroke="#b9b9b9" stroke-width="1.6" stroke-dasharray="3 4" opacity="0.8"/>
<path d="M416 464V660" stroke="#b9b9b9" stroke-width="1.6" stroke-dasharray="3 4" opacity="0.8"/>
<path d="M458 464V660" stroke="#b9b9b9" stroke-width="1.6" stroke-dasharray="3 4" opacity="0.8"/>
<path d="M500 464V660" stroke="#b9b9b9" stroke-width="1.6" stroke-dasharray="3 4" opacity="0.8"/>
<path d="M542 464V660" stroke="#b9b9b9" stroke-width="1.6" stroke-dasharray="3 4" opacity="0.8"/>
<path d="M584 464V660" stroke="#b9b9b9" stroke-width="1.6" stroke-dasharray="3 4" opacity="0.8"/>
<path d="M626 464V660" stroke="#b9b9b9" stroke-width="1.6" stroke-dasharray="3 4" opacity="0.8"/>
<path d="M668 464V660" stroke="#b9b9b9" stroke-width="1.6" stroke-dasharray="3 4" opacity="0.8"/>
<path d="M710 464V660" stroke="#b9b9b9" stroke-width="1.6" stroke-dasharray="3 4" opacity="0.8"/>
<path d="M301 480H750" stroke="#b9b9b9" stroke-width="1.6" stroke-dasharray="3 4" opacity="0.8"/>
<rect x="758" y="477" width="38" height="6" fill="#555" opacity="0.55"/>
<path d="M301 516H750" stroke="#b9b9b9" stroke-width="1.6" stroke-dasharray="3 4" opacity="0.8"/>
<rect x="758" y="513" width="38" height="6" fill="#555" opacity="0.55"/>
<path d="M301 552H750" stroke="#b9b9b9" stroke-width="1.6" stroke-dasharray="3 4" opacity="0.8"/>
<rect x="758" y="549" width="38" height="6" fill="#555" opacity="0.55"/>
<path d="M301 588H750" stroke="#b9b9b9" stroke-width="1.6" stroke-dasharray="3 4" opacity="0.8"/>
<rect x="758" y="585" width="38" height="6" fill="#555" opacity="0.55"/>
<path d="M301 624H750" stroke="#b9b9b9" stroke-width="1.6" stroke-dasharray="3 4" opacity="0.8"/>
<rect x="758" y="621" width="38" height="6" fill="#555" opacity="0.55"/>
<path d="M750 462V688" stroke="#666" stroke-width="2"/>
<path d="M297 662H805" stroke="#666" stroke-width="2"/>
<rect x="309" y="670" width="52" height="7" fill="#444" opacity="0.65"/>
<rect x="383" y="670" width="52" height="7" fill="#444" opacity="0.65"/>
<rect x="457" y="670" width="52" height="7" fill="#444" opacity="0.65"/>
<rect x="531" y="670" width="52" height="7" fill="#444" opacity="0.65"/>
<rect x="605" y="670" width="52" height="7" fill="#444" opacity="0.65"/>
<rect x="679" y="670" width="52" height="7" fill="#444" opacity="0.65"/>
<rect x="307" y="470" width="230" height="6" fill="#333" opacity="0.55"/>
<rect x="817" y="430" width="513" height="258" fill="#fff"/>
<rect x="817" y="430" width="513" height="32" fill="#c3d3e6"/>
<rect x="847" y="442" width="70" height="8" fill="#5d7690" opacity="0.8"/>
<rect x="1230" y="439" width="16" height="14" fill="#8da3bd" opacity="0.8"/>
<rect x="1268" y="439" width="16" height="14" fill="#8da3bd" opacity="0.8"/>
<rect x="1304" y="439" width="16" height="14" fill="#8da3bd" opacity="0.8"/>
<path d="M852 464V660" stroke="#b9b9b9" stroke-width="1.6" stroke-dasharray="3 4" opacity="0.8"/>
<path d="M894 464V660" stroke="#b9b9b9" stroke-width="1.6" stroke-dasharray="3 4" opacity="0.8"/>
<path d="M936 464V660" stroke="#b9b9b9" stroke-width="1.6" stroke-dasharray="3 4" opacity="0.8"/>
<path d="M978 464V660" stroke="#b9b9b9" stroke-width="1.6" stroke-dasharray="3 4" opacity="0.8"/>
<path d="M1020 464V660" stroke="#b9b9b9" stroke-width="1.6" stroke-dasharray="3 4" opacity="0.8"/>
<path d="M1062 464V660" stroke="#b9b9b9" stroke-width="1.6" stroke-dasharray="3 4" opacity="0.8"/>
<path d="M1104 464V660" stroke="#b9b9b9" stroke-width="1.6" stroke-dasharray="3 4" opacity="0.8"/>
<path d="M1146 464V660" stroke="#b9b9b9" stroke-width="1.6" stroke-dasharray="3 4" opacity="0.8"/>
<path d="M1188 464V660" stroke="#b9b9b9" stroke-width="1.6" stroke-dasharray="3 4" opacity="0.8"/>
<path d="M1230 464V660" stroke="#b9b9b9" stroke-width="1.6" stroke-dasharray="3 4" opacity="0.8"/>
<path d="M1272 464V660" stroke="#b9b9b9" stroke-width="1.6" stroke-dasharray="3 4" opacity="0.8"/>
<path d="M821 480H1275" stroke="#b9b9b9" stroke-width="1.6" stroke-dasharray="3 4" opacity="0.8"/>
<rect x="1283" y="477" width="38" height="6" fill="#555" opacity="0.55"/>
<path d="M821 516H1275" stroke="#b9b9b9" stroke-width="1.6" stroke-dasharray="3 4" opacity="0.8"/>
<rect x="1283" y="513" width="38" height="6" fill="#555" opacity="0.55"/>
<path d="M821 552H1275" stroke="#b9b9b9" stroke-width="1.6" stroke-dasharray="3 4" opacity="0.8"/>
<rect x="1283" y="549" width="38" height="6" fill="#555" opacity="0.55"/>
<path d="M821 588H1275" stroke="#b9b9b9" stroke-width="1.6" stroke-dasharray="3 4" opacity="0.8"/>
<rect x="1283" y="585" width="38" height="6" fill="#555" opacity="0.55"/>
<path d="M821 624H1275" stroke="#b9b9b9" stroke-width="1.6" stroke-dasharray="3 4" opacity="0.8"/>
<rect x="1283" y="621" width="38" height="6" fill="#555" opacity="0.55"/>
<path d="M1275 462V688" stroke="#666" stroke-width="2"/>
<path d="M817 662H1330" stroke="#666" stroke-width="2"/>
<rect x="829" y="670" width="52" height="7" fill="#444" opacity="0.65"/>
<rect x="903" y="670" width="52" height="7" fill="#444" opacity="0.65"/>
<rect x="977" y="670" width="52" height="7" fill="#444" opacity="0.65"/>
<rect x="1051" y="670" width="52" height="7" fill="#444" opacity="0.65"/>
<rect x="1125" y="670" width="52" height="7" fill="#444" opacity="0.65"/>
<rect x="1199" y="670" width="52" height="7" fill="#444" opacity="0.65"/>
<rect x="827" y="470" width="230" height="6" fill="#333" opacity="0.55"/>
<rect x="305" y="213" width="215" height="68" fill="#df1a1a"/>
<rect x="305" y="213" width="215" height="18" fill="#c41414"/>
<rect x="392" y="216" width="42" height="14" fill="#f2f2f2"/>
<text x="343" y="276" font-family="Liberation Sans,sans-serif" font-size="34" fill="#fff">23</text><text x="455" y="276" font-family="Liberation Sans,sans-serif" font-size="34" fill="#fff">24</text>
<path d="M305 322 C360 300 420 278 470 272 C520 266 560 262 600 262" fill="none" stroke="#5a6fe0" stroke-width="3"/>
<path d="M520 262 C600 258 680 268 745 282" fill="none" stroke="#e08a8a" stroke-width="3"/>
<path d="M600 262 C650 262 700 290 745 322" fill="none" stroke="#4fc0a0" stroke-width="3"/>
<path d="M525 262 H600 V340 H615 V348 H640 V340 H660 V352 H690 V358 H700" fill="none" stroke="#222" stroke-width="4.5"/>
<path d="M305 350 H745" stroke="#777" stroke-width="2"/><rect x="312" y="343" width="98" height="8" fill="#222" opacity="0.75"/>
<rect x="753" y="345" width="46" height="14" fill="#333"/>
<path d="M830 362 C850 330 870 305 900 298 C940 288 970 282 1000 284 C1030 288 1050 292 1080 290 C1120 286 1180 275 1245 265" fill="none" stroke="#3f9a5a" stroke-width="4"/>
<path d="M830 300 L840 240 L850 226 L862 268 L880 292 L905 312 L925 296 L950 286 L968 270 L985 222 L996 262 L1012 282 L1032 300 L1042 342 L1058 312 L1080 300 L1108 290 L1140 276 L1170 282 L1200 246 L1215 268 L1245 262" fill="none" stroke="#222" stroke-width="4.5" stroke-linejoin="round"/>
<path d="M985 205V275M1040 300V372M850 215V290M1200 232V290" stroke="#111" stroke-width="3"/>
<rect x="1273" y="258" width="46" height="14" fill="#333"/>
<path d="M305 478 L350 470 L440 476 L520 530 L560 565 L610 585 L680 575 L730 560" fill="none" stroke="#7fe3e0" stroke-width="26" stroke-linejoin="round" opacity="0.9"/>
<path d="M305 490 L330 474 L380 476 L430 486 L460 510 L480 552 L500 540 L530 548 L548 526 L575 575 L600 568 L630 586 L660 572 L680 545 L705 538 L730 536" fill="none" stroke="#333" stroke-width="4.5" stroke-linejoin="round"/>
<path d="M305 534 H745" stroke="#777" stroke-width="2"/><rect x="312" y="528" width="90" height="8" fill="#222" opacity="0.75"/>
<rect x="753" y="530" width="46" height="14" fill="#333"/>
<path d="M300 603 H750 M300 609 H750" stroke="#777" stroke-width="2"/>
<path d="M305 612 C380 610 430 612 470 622 C500 632 520 648 545 660" fill="none" stroke="#e7a0a0" stroke-width="3"/>
<path d="M835 488 C860 510 880 535 905 548 C950 575 1000 590 1050 596 C1100 602 1130 600 1160 592 C1190 584 1215 580 1238 578" fill="none" stroke="#3b4fd8" stroke-width="4"/>
<path d="M835 508 C860 535 880 565 905 578 C950 600 1000 608 1050 614 C1100 622 1130 622 1160 612 C1190 600 1215 596 1238 590" fill="none" stroke="#e0523a" stroke-width="4"/>
<path d="M830 540 L838 480 L850 520 L870 545 L890 585 L905 575 L920 625 L935 600 L960 580 L990 590 L1015 600 L1020 575 L1040 598 L1075 590 L1080 612 L1100 600 L1120 620 L1140 600 L1160 588 L1185 580 L1210 574 L1232 582 L1240 490 L1248 482" fill="none" stroke="#222" stroke-width="4.5" stroke-linejoin="round"/>
<path d="M920 590V645M1020 560V622M1080 575V625M840 470V540" stroke="#111" stroke-width="4"/>
<rect x="1273" y="482" width="46" height="14" fill="#222"/>
<rect x="292" y="690" width="1038" height="22" fill="#e9ebef"/>
<rect x="300" y="692" width="86" height="19" fill="#fff" stroke="#777" stroke-width="2"/>
<rect x="312" y="698" width="60" height="7" fill="#222" opacity="0.7"/>
<rect x="400" y="698" width="62" height="7" fill="#888" opacity="0.5"/>
<rect x="485" y="698" width="62" height="7" fill="#888" opacity="0.5"/>
<rect x="575" y="698" width="62" height="7" fill="#888" opacity="0.5"/>
<rect x="62" y="712" width="1268" height="104" fill="#fcfcfc"/>
<rect x="62" y="768" width="1268" height="23" fill="#e4e5e8"/>
<rect x="88" y="729" width="60" height="7" fill="#333" opacity="0.65"/>
<rect x="340" y="729" width="28" height="7" fill="#333" opacity="0.65"/>
<rect x="430" y="729" width="24" height="7" fill="#333" opacity="0.65"/>
<rect x="498" y="729" width="22" height="7" fill="#333" opacity="0.65"/>
<rect x="560" y="729" width="42" height="7" fill="#333" opacity="0.65"/>
<rect x="668" y="729" width="32" height="7" fill="#333" opacity="0.65"/>
<rect x="768" y="729" width="22" height="7" fill="#333" opacity="0.65"/>
<rect x="858" y="729" width="22" height="7" fill="#333" opacity="0.65"/>
<rect x="950" y="729" width="30" height="7" fill="#333" opacity="0.65"/>
<rect x="1005" y="729" width="70" height="7" fill="#333" opacity="0.65"/>
<rect x="1145" y="729" width="30" height="7" fill="#333" opacity="0.65"/>
<rect x="1290" y="729" width="28" height="7" fill="#333" opacity="0.65"/>
<rect x="78" y="751" width="12" height="12" fill="#3b6fb8" opacity="0.8"/>
<rect x="100" y="753" width="58" height="7" fill="#555" opacity="0.55"/>
<rect x="262" y="753" width="105" height="7" fill="#555" opacity="0.55"/>
<rect x="430" y="753" width="24" height="7" fill="#555" opacity="0.55"/>
<rect x="498" y="753" width="22" height="7" fill="#555" opacity="0.55"/>
<rect x="560" y="753" width="42" height="7" fill="#555" opacity="0.55"/>
<rect x="668" y="753" width="34" height="7" fill="#555" opacity="0.55"/>
<rect x="760" y="753" width="30" height="7" fill="#555" opacity="0.55"/>
<rect x="850" y="753" width="30" height="7" fill="#555" opacity="0.55"/>
<rect x="946" y="753" width="34" height="7" fill="#555" opacity="0.55"/>
<rect x="1060" y="753" width="18" height="7" fill="#555" opacity="0.55"/>
<rect x="1155" y="753" width="18" height="7" fill="#555" opacity="0.55"/>
<rect x="1285" y="753" width="32" height="7" fill="#555" opacity="0.55"/>
<rect x="78" y="774" width="12" height="12" fill="#3b6fb8" opacity="0.8"/>
<rect x="100" y="776" width="58" height="7" fill="#555" opacity="0.55"/>
<rect x="262" y="776" width="105" height="7" fill="#555" opacity="0.55"/>
<rect x="430" y="776" width="24" height="7" fill="#555" opacity="0.55"/>
<rect x="498" y="776" width="22" height="7" fill="#555" opacity="0.55"/>
<rect x="560" y="776" width="42" height="7" fill="#555" opacity="0.55"/>
<rect x="668" y="776" width="34" height="7" fill="#555" opacity="0.55"/>
<rect x="760" y="776" width="30" height="7" fill="#555" opacity="0.55"/>
<rect x="850" y="776" width="30" height="7" fill="#555" opacity="0.55"/>
<rect x="946" y="776" width="34" height="7" fill="#555" opacity="0.55"/>
<rect x="1060" y="776" width="18" height="7" fill="#555" opacity="0.55"/>
<rect x="1155" y="776" width="18" height="7" fill="#555" opacity="0.55"/>
<rect x="1285" y="776" width="32" height="7" fill="#555" opacity="0.55"/>
<rect x="78" y="797" width="12" height="12" fill="#3b6fb8" opacity="0.8"/>
<rect x="100" y="799" width="58" height="7" fill="#555" opacity="0.55"/>
<rect x="262" y="799" width="105" height="7" fill="#555" opacity="0.55"/>
<rect x="430" y="799" width="24" height="7" fill="#555" opacity="0.55"/>
<rect x="498" y="799" width="22" height="7" fill="#555" opacity="0.55"/>
<rect x="560" y="799" width="42" height="7" fill="#555" opacity="0.55"/>
<rect x="668" y="799" width="34" height="7" fill="#555" opacity="0.55"/>
<rect x="760" y="799" width="30" height="7" fill="#555" opacity="0.55"/>
<rect x="850" y="799" width="30" height="7" fill="#555" opacity="0.55"/>
<rect x="946" y="799" width="34" height="7" fill="#555" opacity="0.55"/>
<rect x="1060" y="799" width="18" height="7" fill="#555" opacity="0.55"/>
<rect x="1155" y="799" width="18" height="7" fill="#555" opacity="0.55"/>
<rect x="1285" y="799" width="32" height="7" fill="#555" opacity="0.55"/>
</g></svg><!--P3E--></div>
  <h3>外汇行情软件有哪些作用，外汇行情看盘软件哪个比较好</h3>
  <p><span>外汇交易行情mt4是一款优质的外汇行情接收软件，不仅如此，还能进行行情分析和</span><span>技术操作，这对外汇投资者来说，无疑是一个非常好的帮手。mt4外汇市场上就是最</span><span>好用的外汇行情...</span></p>
  <div class="tm"><svg width="13" height="13" viewBox="0 0 13 13"><circle cx="6.5" cy="6.5" r="5.4" fill="none" stroke="#a8a8a8" stroke-width="1"/><path d="M6.5 3.4V6.8H9" fill="none" stroke="#a8a8a8" stroke-width="1"/></svg><b>2021-04-15 15:11:40</b></div>
  <div class="dash"></div>
</div>
<div class="art" style="top:772px">
  <div class="pic"><!--P4S--><svg width="249" height="145" viewBox="27 38 1343.6 782.4" preserveAspectRatio="none">
<defs><filter id="p4b" filterUnits="userSpaceOnUse" x="0" y="0" width="1400" height="900"><feGaussianBlur stdDeviation="2.4"/></filter></defs>
<rect x="0" y="0" width="1400" height="900" fill="#040404"/>
<g filter="url(#p4b)">
<rect x="27" y="38" width="1344" height="9" fill="#8a8a8a"/>
<rect x="36" y="58" width="200" height="8" fill="#aaa" opacity="0.55"/>
<rect x="36.5" y="246.7" width="7" height="24.2" fill="#35d85a"/>
<rect x="39.2" y="236.5" width="1.6" height="33.4" fill="#35d85a" opacity="0.8"/>
<rect x="47.5" y="261.5" width="7" height="10.3" fill="#e8352e"/>
<rect x="50.2" y="257.9" width="1.6" height="26.4" fill="#e8352e" opacity="0.8"/>
<rect x="58.5" y="253.4" width="7" height="16.1" fill="#e8352e"/>
<rect x="61.2" y="249.6" width="1.6" height="25.5" fill="#e8352e" opacity="0.8"/>
<rect x="69.5" y="251.8" width="7" height="10.8" fill="#35d85a"/>
<rect x="72.2" y="247.4" width="1.6" height="22.4" fill="#35d85a" opacity="0.8"/>
<rect x="80.5" y="252.8" width="7" height="12.1" fill="#35d85a"/>
<rect x="83.2" y="243.5" width="1.6" height="26.5" fill="#35d85a" opacity="0.8"/>
<rect x="91.5" y="249.6" width="7" height="11.8" fill="#e8352e"/>
<rect x="94.2" y="237.2" width="1.6" height="24.4" fill="#e8352e" opacity="0.8"/>
<rect x="102.5" y="244.7" width="7" height="13.3" fill="#e8352e"/>
<rect x="105.2" y="238.3" width="1.6" height="34.4" fill="#e8352e" opacity="0.8"/>
<rect x="113.5" y="215.6" width="7" height="36.0" fill="#e8352e"/>
<rect x="116.2" y="205.6" width="1.6" height="49.9" fill="#e8352e" opacity="0.8"/>
<rect x="124.5" y="190.8" width="7" height="29.8" fill="#e8352e"/>
<rect x="127.2" y="187.2" width="1.6" height="41.1" fill="#e8352e" opacity="0.8"/>
<rect x="135.5" y="190.3" width="7" height="10.0" fill="#35d85a"/>
<rect x="138.2" y="183.8" width="1.6" height="27.4" fill="#35d85a" opacity="0.8"/>
<rect x="146.5" y="191.2" width="7" height="10.0" fill="#35d85a"/>
<rect x="149.2" y="179.4" width="1.6" height="29.2" fill="#35d85a" opacity="0.8"/>
<rect x="157.5" y="194.8" width="7" height="10.0" fill="#35d85a"/>
<rect x="160.2" y="186.0" width="1.6" height="32.0" fill="#35d85a" opacity="0.8"/>
<rect x="168.5" y="185.3" width="7" height="16.3" fill="#e8352e"/>
<rect x="171.2" y="171.6" width="1.6" height="26.2" fill="#e8352e" opacity="0.8"/>
<rect x="179.5" y="186.6" width="7" height="19.5" fill="#35d85a"/>
<rect x="182.2" y="181.9" width="1.6" height="35.3" fill="#35d85a" opacity="0.8"/>
<rect x="190.5" y="198.8" width="7" height="28.3" fill="#35d85a"/>
<rect x="193.2" y="187.4" width="1.6" height="45.5" fill="#35d85a" opacity="0.8"/>
<rect x="201.5" y="211.5" width="7" height="14.3" fill="#e8352e"/>
<rect x="204.2" y="200.8" width="1.6" height="31.8" fill="#e8352e" opacity="0.8"/>
<rect x="212.5" y="203.7" width="7" height="17.1" fill="#e8352e"/>
<rect x="215.2" y="191.4" width="1.6" height="40.3" fill="#e8352e" opacity="0.8"/>
<rect x="223.5" y="193.1" width="7" height="19.6" fill="#e8352e"/>
<rect x="226.2" y="189.4" width="1.6" height="38.8" fill="#e8352e" opacity="0.8"/>
<rect x="234.5" y="192.4" width="7" height="15.3" fill="#35d85a"/>
<rect x="237.2" y="180.4" width="1.6" height="27.9" fill="#35d85a" opacity="0.8"/>
<rect x="245.5" y="198.2" width="7" height="16.5" fill="#35d85a"/>
<rect x="248.2" y="195.0" width="1.6" height="31.9" fill="#35d85a" opacity="0.8"/>
<rect x="256.5" y="207.3" width="7" height="10.0" fill="#35d85a"/>
<rect x="259.2" y="203.7" width="1.6" height="30.3" fill="#35d85a" opacity="0.8"/>
<rect x="267.5" y="210.2" width="7" height="10.0" fill="#35d85a"/>
<rect x="270.2" y="202.9" width="1.6" height="31.9" fill="#35d85a" opacity="0.8"/>
<rect x="278.5" y="202.9" width="7" height="14.4" fill="#e8352e"/>
<rect x="281.2" y="193.9" width="1.6" height="36.5" fill="#e8352e" opacity="0.8"/>
<rect x="289.5" y="193.4" width="7" height="17.3" fill="#e8352e"/>
<rect x="292.2" y="187.3" width="1.6" height="32.0" fill="#e8352e" opacity="0.8"/>
<rect x="300.5" y="191.6" width="7" height="12.6" fill="#e8352e"/>
<rect x="303.2" y="178.0" width="1.6" height="23.1" fill="#e8352e" opacity="0.8"/>
<rect x="311.5" y="188.6" width="7" height="10.0" fill="#e8352e"/>
<rect x="314.2" y="183.1" width="1.6" height="25.8" fill="#e8352e" opacity="0.8"/>
<rect x="322.5" y="176.9" width="7" height="17.5" fill="#e8352e"/>
<rect x="325.2" y="173.8" width="1.6" height="32.2" fill="#e8352e" opacity="0.8"/>
<rect x="333.5" y="164.0" width="7" height="21.5" fill="#e8352e"/>
<rect x="336.2" y="150.5" width="1.6" height="40.5" fill="#e8352e" opacity="0.8"/>
<rect x="344.5" y="159.4" width="7" height="12.5" fill="#e8352e"/>
<rect x="347.2" y="149.0" width="1.6" height="21.4" fill="#e8352e" opacity="0.8"/>
<rect x="355.5" y="156.1" width="7" height="12.6" fill="#e8352e"/>
<rect x="358.2" y="143.4" width="1.6" height="33.3" fill="#e8352e" opacity="0.8"/>
<rect x="366.5" y="156.0" width="7" height="10.0" fill="#e8352e"/>
<rect x="369.2" y="151.9" width="1.6" height="28.1" fill="#e8352e" opacity="0.8"/>
<rect x="377.5" y="153.0" width="7" height="10.0" fill="#e8352e"/>
<rect x="380.2" y="147.7" width="1.6" height="20.6" fill="#e8352e" opacity="0.8"/>
<rect x="388.5" y="147.4" width="7" height="10.0" fill="#e8352e"/>
<rect x="391.2" y="144.4" width="1.6" height="20.4" fill="#e8352e" opacity="0.8"/>
<rect x="399.5" y="148.4" width="7" height="10.0" fill="#35d85a"/>
<rect x="402.2" y="145.1" width="1.6" height="32.0" fill="#35d85a" opacity="0.8"/>
<rect x="410.5" y="148.1" width="7" height="19.5" fill="#35d85a"/>
<rect x="413.2" y="142.3" width="1.6" height="33.1" fill="#35d85a" opacity="0.8"/>
<rect x="421.5" y="158.8" width="7" height="10.0" fill="#e8352e"/>
<rect x="424.2" y="146.5" width="1.6" height="33.9" fill="#e8352e" opacity="0.8"/>
<rect x="432.5" y="158.4" width="7" height="12.9" fill="#35d85a"/>
<rect x="435.2" y="154.4" width="1.6" height="22.5" fill="#35d85a" opacity="0.8"/>
<rect x="443.5" y="164.0" width="7" height="46.8" fill="#35d85a"/>
<rect x="446.2" y="151.8" width="1.6" height="57.3" fill="#35d85a" opacity="0.8"/>
<rect x="454.5" y="203.9" width="7" height="10.0" fill="#e8352e"/>
<rect x="457.2" y="195.1" width="1.6" height="20.3" fill="#e8352e" opacity="0.8"/>
<rect x="465.5" y="190.8" width="7" height="17.3" fill="#e8352e"/>
<rect x="468.2" y="182.0" width="1.6" height="40.9" fill="#e8352e" opacity="0.8"/>
<rect x="476.5" y="189.5" width="7" height="12.1" fill="#35d85a"/>
<rect x="479.2" y="183.7" width="1.6" height="25.9" fill="#35d85a" opacity="0.8"/>
<rect x="487.5" y="194.2" width="7" height="10.0" fill="#35d85a"/>
<rect x="490.2" y="185.3" width="1.6" height="30.5" fill="#35d85a" opacity="0.8"/>
<rect x="498.5" y="195.3" width="7" height="11.3" fill="#35d85a"/>
<rect x="501.2" y="183.4" width="1.6" height="35.1" fill="#35d85a" opacity="0.8"/>
<rect x="509.5" y="198.3" width="7" height="24.4" fill="#35d85a"/>
<rect x="512.2" y="186.3" width="1.6" height="44.2" fill="#35d85a" opacity="0.8"/>
<rect x="520.5" y="214.6" width="7" height="26.1" fill="#35d85a"/>
<rect x="523.2" y="207.7" width="1.6" height="34.6" fill="#35d85a" opacity="0.8"/>
<rect x="531.5" y="234.6" width="7" height="28.2" fill="#35d85a"/>
<rect x="534.2" y="228.7" width="1.6" height="47.2" fill="#35d85a" opacity="0.8"/>
<rect x="542.5" y="249.4" width="7" height="14.0" fill="#e8352e"/>
<rect x="545.2" y="236.1" width="1.6" height="37.8" fill="#e8352e" opacity="0.8"/>
<rect x="553.5" y="245.0" width="7" height="13.7" fill="#e8352e"/>
<rect x="556.2" y="239.6" width="1.6" height="25.3" fill="#e8352e" opacity="0.8"/>
<rect x="564.5" y="236.0" width="7" height="17.7" fill="#e8352e"/>
<rect x="567.2" y="226.1" width="1.6" height="40.1" fill="#e8352e" opacity="0.8"/>
<rect x="575.5" y="219.6" width="7" height="23.0" fill="#e8352e"/>
<rect x="578.2" y="209.5" width="1.6" height="43.8" fill="#e8352e" opacity="0.8"/>
<rect x="586.5" y="189.7" width="7" height="40.0" fill="#e8352e"/>
<rect x="589.2" y="176.7" width="1.6" height="60.5" fill="#e8352e" opacity="0.8"/>
<rect x="597.5" y="165.7" width="7" height="30.2" fill="#e8352e"/>
<rect x="600.2" y="160.7" width="1.6" height="50.9" fill="#e8352e" opacity="0.8"/>
<rect x="608.5" y="152.2" width="7" height="23.7" fill="#e8352e"/>
<rect x="611.2" y="138.5" width="1.6" height="38.0" fill="#e8352e" opacity="0.8"/>
<rect x="619.5" y="135.4" width="7" height="25.9" fill="#e8352e"/>
<rect x="622.2" y="124.4" width="1.6" height="36.6" fill="#e8352e" opacity="0.8"/>
<rect x="630.5" y="109.2" width="7" height="32.4" fill="#e8352e"/>
<rect x="633.2" y="96.2" width="1.6" height="53.4" fill="#e8352e" opacity="0.8"/>
<rect x="641.5" y="73.0" width="7" height="44.0" fill="#e8352e"/>
<rect x="644.2" y="59.2" width="1.6" height="62.5" fill="#e8352e" opacity="0.8"/>
<rect x="652.5" y="72.2" width="7" height="14.2" fill="#35d85a"/>
<rect x="655.2" y="67.8" width="1.6" height="22.4" fill="#35d85a" opacity="0.8"/>
<rect x="663.5" y="76.3" width="7" height="17.1" fill="#35d85a"/>
<rect x="666.2" y="67.5" width="1.6" height="40.0" fill="#35d85a" opacity="0.8"/>
<rect x="674.5" y="84.0" width="7" height="10.3" fill="#e8352e"/>
<rect x="677.2" y="71.9" width="1.6" height="21.6" fill="#e8352e" opacity="0.8"/>
<rect x="685.5" y="82.0" width="7" height="10.0" fill="#e8352e"/>
<rect x="688.2" y="76.3" width="1.6" height="27.4" fill="#e8352e" opacity="0.8"/>
<rect x="696.5" y="82.0" width="7" height="15.0" fill="#35d85a"/>
<rect x="699.2" y="77.5" width="1.6" height="37.5" fill="#35d85a" opacity="0.8"/>
<rect x="707.5" y="89.8" width="7" height="17.5" fill="#35d85a"/>
<rect x="710.2" y="80.4" width="1.6" height="40.0" fill="#35d85a" opacity="0.8"/>
<rect x="718.5" y="99.8" width="7" height="28.6" fill="#35d85a"/>
<rect x="721.2" y="91.3" width="1.6" height="45.1" fill="#35d85a" opacity="0.8"/>
<rect x="729.5" y="118.7" width="7" height="14.4" fill="#35d85a"/>
<rect x="732.2" y="110.8" width="1.6" height="25.3" fill="#35d85a" opacity="0.8"/>
<rect x="740.5" y="118.0" width="7" height="18.2" fill="#e8352e"/>
<rect x="743.2" y="113.1" width="1.6" height="33.8" fill="#e8352e" opacity="0.8"/>
<rect x="751.5" y="115.1" width="7" height="11.6" fill="#35d85a"/>
<rect x="754.2" y="108.5" width="1.6" height="27.9" fill="#35d85a" opacity="0.8"/>
<rect x="762.5" y="118.3" width="7" height="23.1" fill="#35d85a"/>
<rect x="765.2" y="114.1" width="1.6" height="40.1" fill="#35d85a" opacity="0.8"/>
<rect x="773.5" y="133.3" width="7" height="23.2" fill="#35d85a"/>
<rect x="776.2" y="121.8" width="1.6" height="39.3" fill="#35d85a" opacity="0.8"/>
<rect x="784.5" y="149.1" width="7" height="18.0" fill="#35d85a"/>
<rect x="787.2" y="136.0" width="1.6" height="33.0" fill="#35d85a" opacity="0.8"/>
<rect x="795.5" y="149.3" width="7" height="16.7" fill="#e8352e"/>
<rect x="798.2" y="140.7" width="1.6" height="35.8" fill="#e8352e" opacity="0.8"/>
<rect x="806.5" y="149.8" width="7" height="10.0" fill="#e8352e"/>
<rect x="809.2" y="141.5" width="1.6" height="33.1" fill="#e8352e" opacity="0.8"/>
<rect x="817.5" y="148.8" width="7" height="16.9" fill="#35d85a"/>
<rect x="820.2" y="135.4" width="1.6" height="29.1" fill="#35d85a" opacity="0.8"/>
<rect x="828.5" y="156.0" width="7" height="14.1" fill="#35d85a"/>
<rect x="831.2" y="143.7" width="1.6" height="24.3" fill="#35d85a" opacity="0.8"/>
<rect x="839.5" y="159.0" width="7" height="10.0" fill="#e8352e"/>
<rect x="842.2" y="155.2" width="1.6" height="21.9" fill="#e8352e" opacity="0.8"/>
<rect x="850.5" y="159.0" width="7" height="10.0" fill="#e8352e"/>
<rect x="853.2" y="147.3" width="1.6" height="32.4" fill="#e8352e" opacity="0.8"/>
<rect x="861.5" y="158.6" width="7" height="10.2" fill="#35d85a"/>
<rect x="864.2" y="148.4" width="1.6" height="20.5" fill="#35d85a" opacity="0.8"/>
<rect x="872.5" y="154.2" width="7" height="15.7" fill="#e8352e"/>
<rect x="875.2" y="148.8" width="1.6" height="38.9" fill="#e8352e" opacity="0.8"/>
<rect x="883.5" y="147.9" width="7" height="15.8" fill="#e8352e"/>
<rect x="886.2" y="134.0" width="1.6" height="37.1" fill="#e8352e" opacity="0.8"/>
<rect x="894.5" y="148.9" width="7" height="28.9" fill="#35d85a"/>
<rect x="897.2" y="140.2" width="1.6" height="42.3" fill="#35d85a" opacity="0.8"/>
<rect x="905.5" y="171.2" width="7" height="28.3" fill="#35d85a"/>
<rect x="908.2" y="160.3" width="1.6" height="36.6" fill="#35d85a" opacity="0.8"/>
<rect x="916.5" y="192.0" width="7" height="21.7" fill="#35d85a"/>
<rect x="919.2" y="188.8" width="1.6" height="35.0" fill="#35d85a" opacity="0.8"/>
<rect x="927.5" y="205.5" width="7" height="11.8" fill="#35d85a"/>
<rect x="930.2" y="201.8" width="1.6" height="35.6" fill="#35d85a" opacity="0.8"/>
<rect x="938.5" y="205.3" width="7" height="13.8" fill="#e8352e"/>
<rect x="941.2" y="201.2" width="1.6" height="26.0" fill="#e8352e" opacity="0.8"/>
<rect x="949.5" y="208.3" width="7" height="10.0" fill="#35d85a"/>
<rect x="952.2" y="202.4" width="1.6" height="20.1" fill="#35d85a" opacity="0.8"/>
<rect x="960.5" y="208.1" width="7" height="11.5" fill="#35d85a"/>
<rect x="963.2" y="196.1" width="1.6" height="23.7" fill="#35d85a" opacity="0.8"/>
<rect x="971.5" y="210.9" width="7" height="10.0" fill="#e8352e"/>
<rect x="974.2" y="201.6" width="1.6" height="29.2" fill="#e8352e" opacity="0.8"/>
<rect x="982.5" y="208.4" width="7" height="10.0" fill="#e8352e"/>
<rect x="985.2" y="197.8" width="1.6" height="24.8" fill="#e8352e" opacity="0.8"/>
<rect x="993.5" y="206.1" width="7" height="10.4" fill="#e8352e"/>
<rect x="996.2" y="196.1" width="1.6" height="31.2" fill="#e8352e" opacity="0.8"/>
<rect x="1004.5" y="203.9" width="7" height="10.0" fill="#e8352e"/>
<rect x="1007.2" y="200.1" width="1.6" height="31.8" fill="#e8352e" opacity="0.8"/>
<rect x="1015.5" y="202.4" width="7" height="28.5" fill="#35d85a"/>
<rect x="1018.2" y="193.3" width="1.6" height="51.3" fill="#35d85a" opacity="0.8"/>
<rect x="1026.5" y="224.4" width="7" height="52.1" fill="#35d85a"/>
<rect x="1029.2" y="215.6" width="1.6" height="63.9" fill="#35d85a" opacity="0.8"/>
<rect x="1037.5" y="271.6" width="7" height="28.1" fill="#35d85a"/>
<rect x="1040.2" y="268.0" width="1.6" height="39.3" fill="#35d85a" opacity="0.8"/>
<rect x="1048.5" y="293.8" width="7" height="15.5" fill="#35d85a"/>
<rect x="1051.2" y="282.4" width="1.6" height="28.1" fill="#35d85a" opacity="0.8"/>
<rect x="1059.5" y="302.0" width="7" height="10.4" fill="#35d85a"/>
<rect x="1062.2" y="295.2" width="1.6" height="18.7" fill="#35d85a" opacity="0.8"/>
<rect x="1070.5" y="302.0" width="7" height="10.0" fill="#e8352e"/>
<rect x="1073.2" y="290.9" width="1.6" height="26.8" fill="#e8352e" opacity="0.8"/>
<rect x="1081.5" y="302.2" width="7" height="10.0" fill="#35d85a"/>
<rect x="1084.2" y="289.0" width="1.6" height="19.7" fill="#35d85a" opacity="0.8"/>
<rect x="134" y="165" width="2.4" height="115" fill="#e8352e" opacity="0.85"/>
<rect x="409" y="112" width="2.4" height="68" fill="#e8352e" opacity="0.85"/>
<rect x="654" y="58" width="2.4" height="82" fill="#e8352e" opacity="0.85"/>
<rect x="899" y="120" width="2.4" height="80" fill="#35d85a" opacity="0.85"/>
<rect x="54" y="240" width="2.4" height="60" fill="#e8352e" opacity="0.85"/>
<rect x="1074" y="290" width="2.4" height="45" fill="#d8d060" opacity="0.85"/>
<path d="M27 301H1371" stroke="#9a9a9a" stroke-width="2.2" opacity="0.8"/>
<rect x="27" y="337" width="1344" height="6" fill="#b4b4b4"/>
<rect x="27" y="467" width="1344" height="6" fill="#b4b4b4"/>
<rect x="27" y="575" width="1344" height="6" fill="#b4b4b4"/>
<rect x="27" y="683" width="1344" height="6" fill="#b4b4b4"/>
<rect x="27" y="788" width="1344" height="2.5" fill="#9a9a9a"/>
<rect x="32" y="797" width="68" height="9" fill="#bbb" opacity="0.6"/>
<rect x="123" y="797" width="68" height="9" fill="#bbb" opacity="0.6"/>
<rect x="214" y="797" width="68" height="9" fill="#bbb" opacity="0.6"/>
<rect x="305" y="797" width="68" height="9" fill="#bbb" opacity="0.6"/>
<rect x="396" y="797" width="68" height="9" fill="#bbb" opacity="0.6"/>
<rect x="487" y="797" width="68" height="9" fill="#bbb" opacity="0.6"/>
<rect x="578" y="797" width="68" height="9" fill="#bbb" opacity="0.6"/>
<rect x="669" y="797" width="68" height="9" fill="#bbb" opacity="0.6"/>
<rect x="760" y="797" width="68" height="9" fill="#bbb" opacity="0.6"/>
<rect x="851" y="797" width="68" height="9" fill="#bbb" opacity="0.6"/>
<rect x="942" y="797" width="68" height="9" fill="#bbb" opacity="0.6"/>
<rect x="1033" y="797" width="68" height="9" fill="#bbb" opacity="0.6"/>
<rect x="32" y="352" width="200" height="8" fill="#aaa" opacity="0.55"/>
<rect x="32" y="482" width="200" height="8" fill="#aaa" opacity="0.55"/>
<rect x="32" y="590" width="200" height="8" fill="#aaa" opacity="0.55"/>
<rect x="32" y="698" width="200" height="8" fill="#aaa" opacity="0.55"/>
<path d="M400 378 C480 372 560 376 640 380 C760 376 860 372 1010 378 L1010 440 C900 450 700 445 400 440Z" fill="#0c1445" opacity="0.55"/>
<path d="M300 525 C500 520 800 520 1100 530 L1100 572 H300Z" fill="#0c1340" opacity="0.55"/>
<path d="M27 615 C60 625 100 640 140 650 L27 670Z M430 625 C480 640 540 655 600 650 L600 630Z M900 640 C960 650 1020 660 1090 672 L1090 640Z" fill="#101850" opacity="0.6"/>
<path d="M600 745 C760 750 900 760 1090 775 L1090 745Z" fill="#0c1340" opacity="0.5"/>
<rect x="290" y="382.0" width="3" height="4.0" fill="#c83228" opacity="0.85"/>
<rect x="301" y="370.1" width="3" height="15.9" fill="#c83228" opacity="0.85"/>
<rect x="312" y="362.6" width="3" height="23.4" fill="#c83228" opacity="0.85"/>
<rect x="323" y="356.2" width="3" height="29.8" fill="#c83228" opacity="0.85"/>
<rect x="334" y="350.5" width="3" height="35.5" fill="#c83228" opacity="0.85"/>
<rect x="345" y="355.2" width="3" height="30.8" fill="#c83228" opacity="0.85"/>
<rect x="356" y="361.4" width="3" height="24.6" fill="#c83228" opacity="0.85"/>
<rect x="367" y="368.6" width="3" height="17.4" fill="#c83228" opacity="0.85"/>
<rect x="378" y="378.4" width="3" height="7.6" fill="#c83228" opacity="0.85"/>
<rect x="570" y="382.0" width="3" height="4.0" fill="#c83228" opacity="0.55"/>
<rect x="581" y="379.6" width="3" height="6.4" fill="#c83228" opacity="0.55"/>
<rect x="592" y="378.1" width="3" height="7.9" fill="#c83228" opacity="0.55"/>
<rect x="603" y="376.8" width="3" height="9.2" fill="#c83228" opacity="0.55"/>
<rect x="614" y="375.7" width="3" height="10.3" fill="#c83228" opacity="0.55"/>
<rect x="625" y="374.6" width="3" height="11.4" fill="#c83228" opacity="0.55"/>
<rect x="636" y="373.6" width="3" height="12.4" fill="#c83228" opacity="0.55"/>
<rect x="647" y="372.7" width="3" height="13.3" fill="#c83228" opacity="0.55"/>
<rect x="658" y="371.7" width="3" height="14.3" fill="#c83228" opacity="0.55"/>
<rect x="669" y="370.9" width="3" height="15.1" fill="#c83228" opacity="0.55"/>
<rect x="680" y="370.0" width="3" height="16.0" fill="#c83228" opacity="0.55"/>
<rect x="691" y="370.9" width="3" height="15.1" fill="#c83228" opacity="0.55"/>
<rect x="702" y="371.7" width="3" height="14.3" fill="#c83228" opacity="0.55"/>
<rect x="713" y="372.7" width="3" height="13.3" fill="#c83228" opacity="0.55"/>
<rect x="724" y="373.6" width="3" height="12.4" fill="#c83228" opacity="0.55"/>
<rect x="735" y="374.6" width="3" height="11.4" fill="#c83228" opacity="0.55"/>
<rect x="746" y="375.7" width="3" height="10.3" fill="#c83228" opacity="0.55"/>
<rect x="757" y="376.8" width="3" height="9.2" fill="#c83228" opacity="0.55"/>
<rect x="768" y="378.1" width="3" height="7.9" fill="#c83228" opacity="0.55"/>
<rect x="779" y="379.6" width="3" height="6.4" fill="#c83228" opacity="0.55"/>
<rect x="790" y="382.0" width="3" height="4.0" fill="#c83228" opacity="0.55"/>
<rect x="1040" y="382.0" width="3" height="4.0" fill="#c83228" opacity="0.5"/>
<rect x="1051" y="375.2" width="3" height="10.8" fill="#c83228" opacity="0.5"/>
<rect x="1062" y="371.0" width="3" height="15.0" fill="#c83228" opacity="0.5"/>
<rect x="1073" y="372.8" width="3" height="13.2" fill="#c83228" opacity="0.5"/>
<rect x="1084" y="377.6" width="3" height="8.4" fill="#c83228" opacity="0.5"/>
<rect x="105" y="528.0" width="3" height="4.0" fill="#c83228" opacity="0.85"/>
<rect x="116" y="519.8" width="3" height="12.2" fill="#c83228" opacity="0.85"/>
<rect x="127" y="514.6" width="3" height="17.4" fill="#c83228" opacity="0.85"/>
<rect x="138" y="510.2" width="3" height="21.8" fill="#c83228" opacity="0.85"/>
<rect x="149" y="506.2" width="3" height="25.8" fill="#c83228" opacity="0.85"/>
<rect x="160" y="502.6" width="3" height="29.4" fill="#c83228" opacity="0.85"/>
<rect x="171" y="499.1" width="3" height="32.9" fill="#c83228" opacity="0.85"/>
<rect x="182" y="495.8" width="3" height="36.2" fill="#c83228" opacity="0.85"/>
<rect x="193" y="492.7" width="3" height="39.3" fill="#c83228" opacity="0.85"/>
<rect x="204" y="489.6" width="3" height="42.4" fill="#c83228" opacity="0.85"/>
<rect x="215" y="489.3" width="3" height="42.7" fill="#c83228" opacity="0.85"/>
<rect x="226" y="492.4" width="3" height="39.6" fill="#c83228" opacity="0.85"/>
<rect x="237" y="495.5" width="3" height="36.5" fill="#c83228" opacity="0.85"/>
<rect x="248" y="498.8" width="3" height="33.2" fill="#c83228" opacity="0.85"/>
<rect x="259" y="502.2" width="3" height="29.8" fill="#c83228" opacity="0.85"/>
<rect x="270" y="505.9" width="3" height="26.1" fill="#c83228" opacity="0.85"/>
<rect x="281" y="509.8" width="3" height="22.2" fill="#c83228" opacity="0.85"/>
<rect x="292" y="514.2" width="3" height="17.8" fill="#c83228" opacity="0.85"/>
<rect x="303" y="519.2" width="3" height="12.8" fill="#c83228" opacity="0.85"/>
<rect x="314" y="526.5" width="3" height="5.5" fill="#c83228" opacity="0.85"/>
<rect x="900" y="528.0" width="3" height="4.0" fill="#c83228" opacity="0.55"/>
<rect x="911" y="523.1" width="3" height="8.9" fill="#c83228" opacity="0.55"/>
<rect x="922" y="520.1" width="3" height="11.9" fill="#c83228" opacity="0.55"/>
<rect x="933" y="517.5" width="3" height="14.5" fill="#c83228" opacity="0.55"/>
<rect x="944" y="515.2" width="3" height="16.8" fill="#c83228" opacity="0.55"/>
<rect x="955" y="515.0" width="3" height="17.0" fill="#c83228" opacity="0.55"/>
<rect x="966" y="517.3" width="3" height="14.7" fill="#c83228" opacity="0.55"/>
<rect x="977" y="519.9" width="3" height="12.1" fill="#c83228" opacity="0.55"/>
<rect x="988" y="522.8" width="3" height="9.2" fill="#c83228" opacity="0.55"/>
<rect x="999" y="527.1" width="3" height="4.9" fill="#c83228" opacity="0.55"/>
<rect x="610" y="628.0" width="3" height="4.0" fill="#c83228" opacity="0.85"/>
<rect x="621" y="616.4" width="3" height="15.6" fill="#c83228" opacity="0.85"/>
<rect x="632" y="609.2" width="3" height="22.8" fill="#c83228" opacity="0.85"/>
<rect x="643" y="603.0" width="3" height="29.0" fill="#c83228" opacity="0.85"/>
<rect x="654" y="597.4" width="3" height="34.6" fill="#c83228" opacity="0.85"/>
<rect x="665" y="592.2" width="3" height="39.8" fill="#c83228" opacity="0.85"/>
<rect x="676" y="592.7" width="3" height="39.3" fill="#c83228" opacity="0.85"/>
<rect x="687" y="597.9" width="3" height="34.1" fill="#c83228" opacity="0.85"/>
<rect x="698" y="603.5" width="3" height="28.5" fill="#c83228" opacity="0.85"/>
<rect x="709" y="609.8" width="3" height="22.2" fill="#c83228" opacity="0.85"/>
<rect x="720" y="617.2" width="3" height="14.8" fill="#c83228" opacity="0.85"/>
<rect x="130" y="628.0" width="3" height="4.0" fill="#c83228" opacity="0.5"/>
<rect x="141" y="624.3" width="3" height="7.7" fill="#c83228" opacity="0.5"/>
<rect x="152" y="622.1" width="3" height="9.9" fill="#c83228" opacity="0.5"/>
<rect x="163" y="620.1" width="3" height="11.9" fill="#c83228" opacity="0.5"/>
<rect x="174" y="618.4" width="3" height="13.6" fill="#c83228" opacity="0.5"/>
<rect x="185" y="616.7" width="3" height="15.3" fill="#c83228" opacity="0.5"/>
<rect x="196" y="615.2" width="3" height="16.8" fill="#c83228" opacity="0.5"/>
<rect x="207" y="614.3" width="3" height="17.7" fill="#c83228" opacity="0.5"/>
<rect x="218" y="615.7" width="3" height="16.3" fill="#c83228" opacity="0.5"/>
<rect x="229" y="617.3" width="3" height="14.7" fill="#c83228" opacity="0.5"/>
<rect x="240" y="619.0" width="3" height="13.0" fill="#c83228" opacity="0.5"/>
<rect x="251" y="620.8" width="3" height="11.2" fill="#c83228" opacity="0.5"/>
<rect x="262" y="622.8" width="3" height="9.2" fill="#c83228" opacity="0.5"/>
<rect x="273" y="625.3" width="3" height="6.7" fill="#c83228" opacity="0.5"/>
<rect x="40" y="738.0" width="3" height="4.0" fill="#c83228" opacity="0.5"/>
<rect x="51" y="736.3" width="3" height="5.7" fill="#c83228" opacity="0.5"/>
<rect x="62" y="735.2" width="3" height="6.8" fill="#c83228" opacity="0.5"/>
<rect x="73" y="734.2" width="3" height="7.8" fill="#c83228" opacity="0.5"/>
<rect x="84" y="733.4" width="3" height="8.6" fill="#c83228" opacity="0.5"/>
<rect x="95" y="732.6" width="3" height="9.4" fill="#c83228" opacity="0.5"/>
<rect x="106" y="731.9" width="3" height="10.1" fill="#c83228" opacity="0.5"/>
<rect x="117" y="731.2" width="3" height="10.8" fill="#c83228" opacity="0.5"/>
<rect x="128" y="730.5" width="3" height="11.5" fill="#c83228" opacity="0.5"/>
<rect x="139" y="729.9" width="3" height="12.1" fill="#c83228" opacity="0.5"/>
<rect x="150" y="729.2" width="3" height="12.8" fill="#c83228" opacity="0.5"/>
<rect x="161" y="728.6" width="3" height="13.4" fill="#c83228" opacity="0.5"/>
<rect x="172" y="728.1" width="3" height="13.9" fill="#c83228" opacity="0.5"/>
<rect x="183" y="727.5" width="3" height="14.5" fill="#c83228" opacity="0.5"/>
<rect x="194" y="726.9" width="3" height="15.1" fill="#c83228" opacity="0.5"/>
<rect x="205" y="726.4" width="3" height="15.6" fill="#c83228" opacity="0.5"/>
<rect x="216" y="725.8" width="3" height="16.2" fill="#c83228" opacity="0.5"/>
<rect x="227" y="725.3" width="3" height="16.7" fill="#c83228" opacity="0.5"/>
<rect x="238" y="724.8" width="3" height="17.2" fill="#c83228" opacity="0.5"/>
<rect x="249" y="724.3" width="3" height="17.7" fill="#c83228" opacity="0.5"/>
<rect x="260" y="724.2" width="3" height="17.8" fill="#c83228" opacity="0.5"/>
<rect x="271" y="724.7" width="3" height="17.3" fill="#c83228" opacity="0.5"/>
<rect x="282" y="725.3" width="3" height="16.7" fill="#c83228" opacity="0.5"/>
<rect x="293" y="725.8" width="3" height="16.2" fill="#c83228" opacity="0.5"/>
<rect x="304" y="726.3" width="3" height="15.7" fill="#c83228" opacity="0.5"/>
<rect x="315" y="726.9" width="3" height="15.1" fill="#c83228" opacity="0.5"/>
<rect x="326" y="727.4" width="3" height="14.6" fill="#c83228" opacity="0.5"/>
<rect x="337" y="728.0" width="3" height="14.0" fill="#c83228" opacity="0.5"/>
<rect x="348" y="728.6" width="3" height="13.4" fill="#c83228" opacity="0.5"/>
<rect x="359" y="729.2" width="3" height="12.8" fill="#c83228" opacity="0.5"/>
<rect x="370" y="729.8" width="3" height="12.2" fill="#c83228" opacity="0.5"/>
<rect x="381" y="730.4" width="3" height="11.6" fill="#c83228" opacity="0.5"/>
<rect x="392" y="731.1" width="3" height="10.9" fill="#c83228" opacity="0.5"/>
<rect x="403" y="731.8" width="3" height="10.2" fill="#c83228" opacity="0.5"/>
<rect x="414" y="732.5" width="3" height="9.5" fill="#c83228" opacity="0.5"/>
<rect x="425" y="733.3" width="3" height="8.7" fill="#c83228" opacity="0.5"/>
<rect x="436" y="734.2" width="3" height="7.8" fill="#c83228" opacity="0.5"/>
<rect x="447" y="735.1" width="3" height="6.9" fill="#c83228" opacity="0.5"/>
<rect x="458" y="736.1" width="3" height="5.9" fill="#c83228" opacity="0.5"/>
<rect x="469" y="737.7" width="3" height="4.3" fill="#c83228" opacity="0.5"/>
<rect x="620" y="718.0" width="3" height="4.0" fill="#c83228" opacity="0.45"/>
<rect x="631" y="716.1" width="3" height="5.9" fill="#c83228" opacity="0.45"/>
<rect x="642" y="714.9" width="3" height="7.1" fill="#c83228" opacity="0.45"/>
<rect x="653" y="713.9" width="3" height="8.1" fill="#c83228" opacity="0.45"/>
<rect x="664" y="713.0" width="3" height="9.0" fill="#c83228" opacity="0.45"/>
<rect x="675" y="712.1" width="3" height="9.9" fill="#c83228" opacity="0.45"/>
<rect x="686" y="711.3" width="3" height="10.7" fill="#c83228" opacity="0.45"/>
<rect x="697" y="710.6" width="3" height="11.4" fill="#c83228" opacity="0.45"/>
<rect x="708" y="709.8" width="3" height="12.2" fill="#c83228" opacity="0.45"/>
<rect x="719" y="709.1" width="3" height="12.9" fill="#c83228" opacity="0.45"/>
<rect x="730" y="708.5" width="3" height="13.5" fill="#c83228" opacity="0.45"/>
<rect x="741" y="707.8" width="3" height="14.2" fill="#c83228" opacity="0.45"/>
<rect x="752" y="707.2" width="3" height="14.8" fill="#c83228" opacity="0.45"/>
<rect x="763" y="706.5" width="3" height="15.5" fill="#c83228" opacity="0.45"/>
<rect x="774" y="705.9" width="3" height="16.1" fill="#c83228" opacity="0.45"/>
<rect x="785" y="705.3" width="3" height="16.7" fill="#c83228" opacity="0.45"/>
<rect x="796" y="704.7" width="3" height="17.3" fill="#c83228" opacity="0.45"/>
<rect x="807" y="704.2" width="3" height="17.8" fill="#c83228" opacity="0.45"/>
<rect x="818" y="704.4" width="3" height="17.6" fill="#c83228" opacity="0.45"/>
<rect x="829" y="705.0" width="3" height="17.0" fill="#c83228" opacity="0.45"/>
<rect x="840" y="705.6" width="3" height="16.4" fill="#c83228" opacity="0.45"/>
<rect x="851" y="706.2" width="3" height="15.8" fill="#c83228" opacity="0.45"/>
<rect x="862" y="706.8" width="3" height="15.2" fill="#c83228" opacity="0.45"/>
<rect x="873" y="707.4" width="3" height="14.6" fill="#c83228" opacity="0.45"/>
<rect x="884" y="708.1" width="3" height="13.9" fill="#c83228" opacity="0.45"/>
<rect x="895" y="708.8" width="3" height="13.2" fill="#c83228" opacity="0.45"/>
<rect x="906" y="709.4" width="3" height="12.6" fill="#c83228" opacity="0.45"/>
<rect x="917" y="710.2" width="3" height="11.8" fill="#c83228" opacity="0.45"/>
<rect x="928" y="710.9" width="3" height="11.1" fill="#c83228" opacity="0.45"/>
<rect x="939" y="711.7" width="3" height="10.3" fill="#c83228" opacity="0.45"/>
<rect x="950" y="712.5" width="3" height="9.5" fill="#c83228" opacity="0.45"/>
<rect x="961" y="713.4" width="3" height="8.6" fill="#c83228" opacity="0.45"/>
<rect x="972" y="714.3" width="3" height="7.7" fill="#c83228" opacity="0.45"/>
<rect x="983" y="715.4" width="3" height="6.6" fill="#c83228" opacity="0.45"/>
<rect x="994" y="716.8" width="3" height="5.2" fill="#c83228" opacity="0.45"/>
<path d="M35 405 L120 400 L200 402 L290 392 L370 380 L430 392 L520 425 L620 430 L700 418 L760 405 L860 385 L900 395 L960 440 L1030 460 L1085 452" fill="none" stroke="#b79a62" stroke-width="3.2" stroke-linejoin="round" opacity="0.95"/>
<path d="M312 396 L392 384 L452 396 L542 429 L642 434 L722 422 L782 409 L882 389 L922 399 L982 444 L1052 464 L1107 456" fill="none" stroke="#8c8fa8" stroke-width="2.6" stroke-linejoin="round" opacity="0.8"/>
<path d="M194 396 L284 386 L364 374 L424 386 L514 419 L614 424" fill="none" stroke="#c8523a" stroke-width="2.2" stroke-linejoin="round" opacity="0.7"/>
<path d="M35 545 L100 546 L200 520 L300 490 L380 486 L500 515 L620 530 L740 530 L860 546 L960 540 L1085 560" fill="none" stroke="#b79a62" stroke-width="3.2" stroke-linejoin="round" opacity="0.95"/>
<path d="M225 525 L325 495 L405 491 L525 520 L645 535 L765 535 L885 551 L985 545 L1110 565" fill="none" stroke="#8c8fa8" stroke-width="2.6" stroke-linejoin="round" opacity="0.8"/>
<path d="M35 625 L100 640 L200 630 L420 620 L520 630 L600 640 L680 615 L740 605 L800 610 L900 630 L1000 650 L1085 665" fill="none" stroke="#b79a62" stroke-width="3.2" stroke-linejoin="round" opacity="0.95"/>
<path d="M620 636 L700 611 L760 601 L820 606 L920 626 L1020 646 L1105 661" fill="none" stroke="#c9c9c9" stroke-width="2.4" stroke-linejoin="round" opacity="0.8"/>
<path d="M35 631 L100 646 L200 636 L420 626 L520 636 L600 646 L680 621" fill="none" stroke="#7a7fb0" stroke-width="2.4" stroke-linejoin="round" opacity="0.7"/>
<path d="M35 740 L200 735 L400 725 L600 720 L700 712 L900 712 L1030 715 L1085 720" fill="none" stroke="#b79a62" stroke-width="3.2" stroke-linejoin="round" opacity="0.95"/>
<path d="M35 748 L200 743 L400 733 L600 728 L700 720 L900 720 L1030 723 L1085 728" fill="none" stroke="#b0563e" stroke-width="2.2" stroke-linejoin="round" opacity="0.7"/>
<path d="M120 345V786" stroke="#777" stroke-width="1.6" stroke-dasharray="3 9" opacity="0.55"/>
<path d="M225 345V786" stroke="#777" stroke-width="1.6" stroke-dasharray="3 9" opacity="0.55"/>
<path d="M330 345V786" stroke="#777" stroke-width="1.6" stroke-dasharray="3 9" opacity="0.55"/>
<path d="M435 345V786" stroke="#777" stroke-width="1.6" stroke-dasharray="3 9" opacity="0.55"/>
<path d="M540 345V786" stroke="#777" stroke-width="1.6" stroke-dasharray="3 9" opacity="0.55"/>
<path d="M645 345V786" stroke="#777" stroke-width="1.6" stroke-dasharray="3 9" opacity="0.55"/>
<path d="M750 345V786" stroke="#777" stroke-width="1.6" stroke-dasharray="3 9" opacity="0.55"/>
<path d="M855 345V786" stroke="#777" stroke-width="1.6" stroke-dasharray="3 9" opacity="0.55"/>
<path d="M960 345V786" stroke="#777" stroke-width="1.6" stroke-dasharray="3 9" opacity="0.55"/>
<path d="M1065 345V786" stroke="#777" stroke-width="1.6" stroke-dasharray="3 9" opacity="0.55"/>
<path d="M1170 345V786" stroke="#777" stroke-width="1.6" stroke-dasharray="3 9" opacity="0.55"/>
<path d="M1275 345V786" stroke="#777" stroke-width="1.6" stroke-dasharray="3 9" opacity="0.55"/>
<path d="M27 380H1371" stroke="#666" stroke-width="1.6" stroke-dasharray="3 8" opacity="0.5"/>
<path d="M27 525H1371" stroke="#666" stroke-width="1.6" stroke-dasharray="3 8" opacity="0.5"/>
<path d="M27 633H1371" stroke="#666" stroke-width="1.6" stroke-dasharray="3 8" opacity="0.5"/>
<path d="M27 733H1371" stroke="#666" stroke-width="1.6" stroke-dasharray="3 8" opacity="0.5"/>
</g></svg><!--P4E--></div>
  <h3><em>MACD</em>指标原理介绍，<em>MACD</em>红柱绿柱代表什么意思？</h3>
  <p><span>macd指标是运用快速(短期)和慢速(长期)移动平均线及其聚合与分离的征兆，加以双</span><span>重平滑运算。而根据移动平均线原理发展出来的macd，一则去除了移动平均线频繁</span><span>发出假信号的缺...</span></p>
  <div class="tm"><svg width="13" height="13" viewBox="0 0 13 13"><circle cx="6.5" cy="6.5" r="5.4" fill="none" stroke="#a8a8a8" stroke-width="1"/><path d="M6.5 3.4V6.8H9" fill="none" stroke="#a8a8a8" stroke-width="1"/></svg><b>2021-04-15 15:02:22</b></div>
  <div class="dash"></div>
</div>
<div class="art" style="top:954px">
  <div class="pic"><!--P5S--><svg width="249" height="145" viewBox="27 38 1343.6 782.4" preserveAspectRatio="none">
<defs>
<linearGradient id="p5g" x1="0" y1="0" x2="1" y2="0.12"><stop offset="0" stop-color="#9b7f6d"/><stop offset="0.22" stop-color="#b9a69c"/><stop offset="0.5" stop-color="#cdc1bb"/><stop offset="0.8" stop-color="#e3dedb"/><stop offset="1" stop-color="#ebe9e7"/></linearGradient>
<linearGradient id="p5s" x1="0" y1="0" x2="1" y2="0"><stop offset="0" stop-color="#c9a277"/><stop offset="0.25" stop-color="#e9b66e"/><stop offset="0.5" stop-color="#f4e3c4"/><stop offset="0.62" stop-color="#e0a552"/><stop offset="1" stop-color="#b98243"/></linearGradient>
<linearGradient id="p5n" x1="0" y1="0" x2="0" y2="1"><stop offset="0" stop-color="#f4e6a8"/><stop offset="1" stop-color="#b8923e"/></linearGradient>
<filter id="p5b" filterUnits="userSpaceOnUse" x="-60" y="-40" width="1520" height="960"><feGaussianBlur stdDeviation="4"/></filter>
<filter id="p5c" filterUnits="userSpaceOnUse" x="-60" y="-40" width="1520" height="960"><feGaussianBlur stdDeviation="14"/></filter>
</defs>
<rect x="-60" y="-40" width="1520" height="960" fill="url(#p5g)"/>
<g filter="url(#p5c)">
<polygon points="27,70 120,60 420,330 250,330" fill="#f0cf98" opacity="0.75"/>
<polygon points="27,150 60,140 260,330 150,330" fill="#f6e2b8" opacity="0.7"/>
<ellipse cx="200" cy="185" rx="45" ry="40" fill="#efe6e0" opacity="0.8"/>
<polygon points="27,38 500,38 380,120 27,180" fill="#8d7362" opacity="0.45"/>
</g>
<g filter="url(#p5b)">
<ellipse cx="310" cy="305" rx="148" ry="56" fill="#e29a6a"/>
<ellipse cx="300" cy="296" rx="110" ry="36" fill="#eaa878"/>
<ellipse cx="790" cy="305" rx="158" ry="56" fill="#dd9d6a"/>
<ellipse cx="790" cy="298" rx="120" ry="38" fill="#e6aa78"/>
<polygon points="640,175 740,190 745,245 700,250 660,215" fill="#6d6268" opacity="0.85"/>
<polygon points="700,200 740,205 740,245 705,245" fill="#d9c6a4" opacity="0.9"/>
<polygon points="622,132 760,158 765,192 705,200 628,150" fill="url(#p5n)"/>
<polygon points="700,170 760,160 768,192 712,200" fill="#d7b45a"/>
<polygon points="752,158 980,235 1240,330 1000,330 935,262 760,196" fill="#14181f"/>
<polygon points="780,178 960,240 950,256 772,192" fill="#3a4250" opacity="0.7"/>
<polygon points="945,240 985,232 1000,262 958,280" fill="#c9a85a"/>
<polygon points="990,245 1240,332 1050,332 985,275" fill="#222a36"/>
<path d="M1150 212 L1115 268" stroke="#9db5ac" stroke-width="7" fill="none"/>
<rect x="392" y="150" width="236" height="190" fill="url(#p5s)"/>
<ellipse cx="510" cy="150" rx="118" ry="46" fill="#e3a574"/>
<ellipse cx="505" cy="146" rx="88" ry="30" fill="#ecb78c"/>
<path d="M392 196 Q510 250 628 196 M392 228 Q510 282 628 228 M392 260 Q510 314 628 260 M392 290 Q510 344 628 290" stroke="#a8743a" stroke-width="6" fill="none" opacity="0.7"/>
<path d="M392 180 Q510 234 628 180 M392 212 Q510 266 628 212 M392 244 Q510 298 628 244" stroke="#f6e8d0" stroke-width="5" fill="none" opacity="0.75"/>
<rect x="505" y="170" width="34" height="160" fill="#fbf3e4" opacity="0.55"/>
</g>
</svg><!--P5E--></div>
  <h3>去杠杆是什么意思？外汇交易去杠杆是指什么？</h3>
  <p><span>去杠杆是指金融机构或金融市场减少杠杆的过程，而杠杆指使用较少的本金获取高收</span><span>益。这种模式在金融危机爆发前为不少企业和机构所采用，特别是投资银行，杠杆化</span><span>的程度一般都很...</span></p>
  <div class="tm"><svg width="13" height="13" viewBox="0 0 13 13"><circle cx="6.5" cy="6.5" r="5.4" fill="none" stroke="#a8a8a8" stroke-width="1"/><path d="M6.5 3.4V6.8H9" fill="none" stroke="#a8a8a8" stroke-width="1"/></svg><b>2021-04-15 14:48:08</b></div>
  <div class="dash"></div>
</div>

<!-- SIDEBAR -->
<div class="side">
  <h2>热点资讯</h2>
  <div class="hl"></div>
</div>
<!-- HOT LIST -->
<div class="hot" style="top:237px"><div class="t"><span>监管信息早知道，本周4家交易商牌照状态发生变动</span></div><div class="m" style="margin-top:4px"><svg width="18" height="18" viewBox="90 100 764 782"><rect x="90" y="100" width="764" height="782" rx="200" fill="#f4c41d"/><circle cx="470" cy="490" r="285" fill="#4a1a14"/><path d="M508 200 L534 200 L695 452 L752 414 L760 440 L618 655 L692 666 L684 688 L420 693 L445 780 L424 784 L398 700 C368 640 368 590 410 555 C450 525 530 522 585 502 C594 450 572 380 547 312 L228 338 L230 320 L543 293 Z" fill="#e9b21c"/><ellipse cx="432" cy="430" rx="30" ry="11" fill="#f4c41d"/><path d="M205 428 L262 404 M212 575 L268 520 M287 650 L292 596" stroke="#e9b21c" stroke-width="12" fill="none" stroke-linecap="round"/></svg><span class="src">外汇天眼<i>|</i>天眼新闻</span><span class="ago">1天前</span></div><div class="ln" style="top:66px"></div></div>
<div class="hot" style="top:318px"><div class="t"><span>【客诉】5月客诉榜单汇总出炉，无监管交易商真不能</span><span>碰！</span></div><div class="m" style="margin-top:0px"><svg width="18" height="18" viewBox="90 100 764 782"><rect x="90" y="100" width="764" height="782" rx="200" fill="#f4c41d"/><circle cx="470" cy="490" r="285" fill="#4a1a14"/><path d="M508 200 L534 200 L695 452 L752 414 L760 440 L618 655 L692 666 L684 688 L420 693 L445 780 L424 784 L398 700 C368 640 368 590 410 555 C450 525 530 522 585 502 C594 450 572 380 547 312 L228 338 L230 320 L543 293 Z" fill="#e9b21c"/><ellipse cx="432" cy="430" rx="30" ry="11" fill="#f4c41d"/><path d="M205 428 L262 404 M212 575 L268 520 M287 650 L292 596" stroke="#e9b21c" stroke-width="12" fill="none" stroke-linecap="round"/></svg><span class="src">外汇天眼<i>|</i>天眼新闻</span><span class="ago">2天前</span></div><div class="ln" style="top:84px"></div></div>
<div class="hot" style="top:417px"><div class="t"><span>事件分析 | 人民币兑美元再创新高 监管层三次重磅发声</span><span>传递什么信号?</span></div><div class="m" style="margin-top:0px"><svg width="18" height="18" viewBox="90 100 764 782"><rect x="90" y="100" width="764" height="782" rx="200" fill="#f4c41d"/><circle cx="470" cy="490" r="285" fill="#4a1a14"/><path d="M508 200 L534 200 L695 452 L752 414 L760 440 L618 655 L692 666 L684 688 L420 693 L445 780 L424 784 L398 700 C368 640 368 590 410 555 C450 525 530 522 585 502 C594 450 572 380 547 312 L228 338 L230 320 L543 293 Z" fill="#e9b21c"/><ellipse cx="432" cy="430" rx="30" ry="11" fill="#f4c41d"/><path d="M205 428 L262 404 M212 575 L268 520 M287 650 L292 596" stroke="#e9b21c" stroke-width="12" fill="none" stroke-linecap="round"/></svg><span class="src">外汇天眼<i>|</i>天眼头条</span><span class="ago">2天前</span></div><div class="ln" style="top:84px"></div></div>
<div class="hot" style="top:516px"><div class="t"><span>事件分析丨Mastercard更新加密奖励、稳定币和CBDC</span><span>计划</span></div><div class="m" style="margin-top:0px"><svg width="18" height="18" viewBox="90 100 764 782"><rect x="90" y="100" width="764" height="782" rx="200" fill="#f4c41d"/><circle cx="470" cy="490" r="285" fill="#4a1a14"/><path d="M508 200 L534 200 L695 452 L752 414 L760 440 L618 655 L692 666 L684 688 L420 693 L445 780 L424 784 L398 700 C368 640 368 590 410 555 C450 525 530 522 585 502 C594 450 572 380 547 312 L228 338 L230 320 L543 293 Z" fill="#e9b21c"/><ellipse cx="432" cy="430" rx="30" ry="11" fill="#f4c41d"/><path d="M205 428 L262 404 M212 575 L268 520 M287 650 L292 596" stroke="#e9b21c" stroke-width="12" fill="none" stroke-linecap="round"/></svg><span class="src">外汇天眼<i>|</i>天眼头条</span><span class="ago">2天前</span></div><div class="ln" style="top:84px"></div></div>
<div class="hot" style="top:615px"><div class="t"><span>投行持仓报告 | 路透IFR欧元兑英镑仓位调整 各投行挂单</span><span>未变</span></div><div class="m" style="margin-top:0px"><svg width="18" height="18" viewBox="90 100 764 782"><rect x="90" y="100" width="764" height="782" rx="200" fill="#f4c41d"/><circle cx="470" cy="490" r="285" fill="#4a1a14"/><path d="M508 200 L534 200 L695 452 L752 414 L760 440 L618 655 L692 666 L684 688 L420 693 L445 780 L424 784 L398 700 C368 640 368 590 410 555 C450 525 530 522 585 502 C594 450 572 380 547 312 L228 338 L230 320 L543 293 Z" fill="#e9b21c"/><ellipse cx="432" cy="430" rx="30" ry="11" fill="#f4c41d"/><path d="M205 428 L262 404 M212 575 L268 520 M287 650 L292 596" stroke="#e9b21c" stroke-width="12" fill="none" stroke-linecap="round"/></svg><span class="src">外汇天眼<i>|</i>天眼头条</span><span class="ago">2天前</span></div><div class="ln" style="top:84px"></div></div>
<div class="hot" style="top:714px"><div class="t"><span>数据解读 | 美国重磅数据来袭 美元指数后市如何走?</span></div><div class="m" style="margin-top:4px"><svg width="18" height="18" viewBox="90 100 764 782"><rect x="90" y="100" width="764" height="782" rx="200" fill="#f4c41d"/><circle cx="470" cy="490" r="285" fill="#4a1a14"/><path d="M508 200 L534 200 L695 452 L752 414 L760 440 L618 655 L692 666 L684 688 L420 693 L445 780 L424 784 L398 700 C368 640 368 590 410 555 C450 525 530 522 585 502 C594 450 572 380 547 312 L228 338 L230 320 L543 293 Z" fill="#e9b21c"/><ellipse cx="432" cy="430" rx="30" ry="11" fill="#f4c41d"/><path d="M205 428 L262 404 M212 575 L268 520 M287 650 L292 596" stroke="#e9b21c" stroke-width="12" fill="none" stroke-linecap="round"/></svg><span class="src">外汇天眼<i>|</i>天眼头条</span><span class="ago">2天前</span></div><div class="ln" style="top:66px"></div></div>
<div class="hot" style="top:795px"><div class="t"><span>事件分析| IIF：美国银行有望在2021年实现<q>“</q>破纪录<q>”</q></span><span>的收益</span></div><div class="m" style="margin-top:0px"><svg width="18" height="18" viewBox="90 100 764 782"><rect x="90" y="100" width="764" height="782" rx="200" fill="#f4c41d"/><circle cx="470" cy="490" r="285" fill="#4a1a14"/><path d="M508 200 L534 200 L695 452 L752 414 L760 440 L618 655 L692 666 L684 688 L420 693 L445 780 L424 784 L398 700 C368 640 368 590 410 555 C450 525 530 522 585 502 C594 450 572 380 547 312 L228 338 L230 320 L543 293 Z" fill="#e9b21c"/><ellipse cx="432" cy="430" rx="30" ry="11" fill="#f4c41d"/><path d="M205 428 L262 404 M212 575 L268 520 M287 650 L292 596" stroke="#e9b21c" stroke-width="12" fill="none" stroke-linecap="round"/></svg><span class="src">外汇天眼<i>|</i>天眼头条</span><span class="ago">2天前</span></div><div class="ln" style="top:84px"></div></div>
<div class="hot" style="top:894px"><div class="t"><span>数据解读丨英镑受英国央行提振 美元看向通胀数据</span></div><div class="m" style="margin-top:4px"><svg width="18" height="18" viewBox="90 100 764 782"><rect x="90" y="100" width="764" height="782" rx="200" fill="#f4c41d"/><circle cx="470" cy="490" r="285" fill="#4a1a14"/><path d="M508 200 L534 200 L695 452 L752 414 L760 440 L618 655 L692 666 L684 688 L420 693 L445 780 L424 784 L398 700 C368 640 368 590 410 555 C450 525 530 522 585 502 C594 450 572 380 547 312 L228 338 L230 320 L543 293 Z" fill="#e9b21c"/><ellipse cx="432" cy="430" rx="30" ry="11" fill="#f4c41d"/><path d="M205 428 L262 404 M212 575 L268 520 M287 650 L292 596" stroke="#e9b21c" stroke-width="12" fill="none" stroke-linecap="round"/></svg><span class="src">外汇天眼<i>|</i>天眼头条</span><span class="ago">2天前</span></div><div class="ln" style="top:66px"></div></div>
<div class="hot" style="top:975px"><div class="t"><span>汇市技术分析 | 商品货币走势分化 纽元兑美元跌幅最大</span></div><div class="m" style="margin-top:4px"><svg width="18" height="18" viewBox="90 100 764 782"><rect x="90" y="100" width="764" height="782" rx="200" fill="#f4c41d"/><circle cx="470" cy="490" r="285" fill="#4a1a14"/><path d="M508 200 L534 200 L695 452 L752 414 L760 440 L618 655 L692 666 L684 688 L420 693 L445 780 L424 784 L398 700 C368 640 368 590 410 555 C450 525 530 522 585 502 C594 450 572 380 547 312 L228 338 L230 320 L543 293 Z" fill="#e9b21c"/><ellipse cx="432" cy="430" rx="30" ry="11" fill="#f4c41d"/><path d="M205 428 L262 404 M212 575 L268 520 M287 650 L292 596" stroke="#e9b21c" stroke-width="12" fill="none" stroke-linecap="round"/></svg><span class="src">外汇天眼<i>|</i>天眼头条</span><span class="ago">2天前</span></div><div class="ln" style="top:66px"></div></div>

<div class="tip"><span>61954828535.html</span></div>
<div class="botline"></div>
</body>
</html>
